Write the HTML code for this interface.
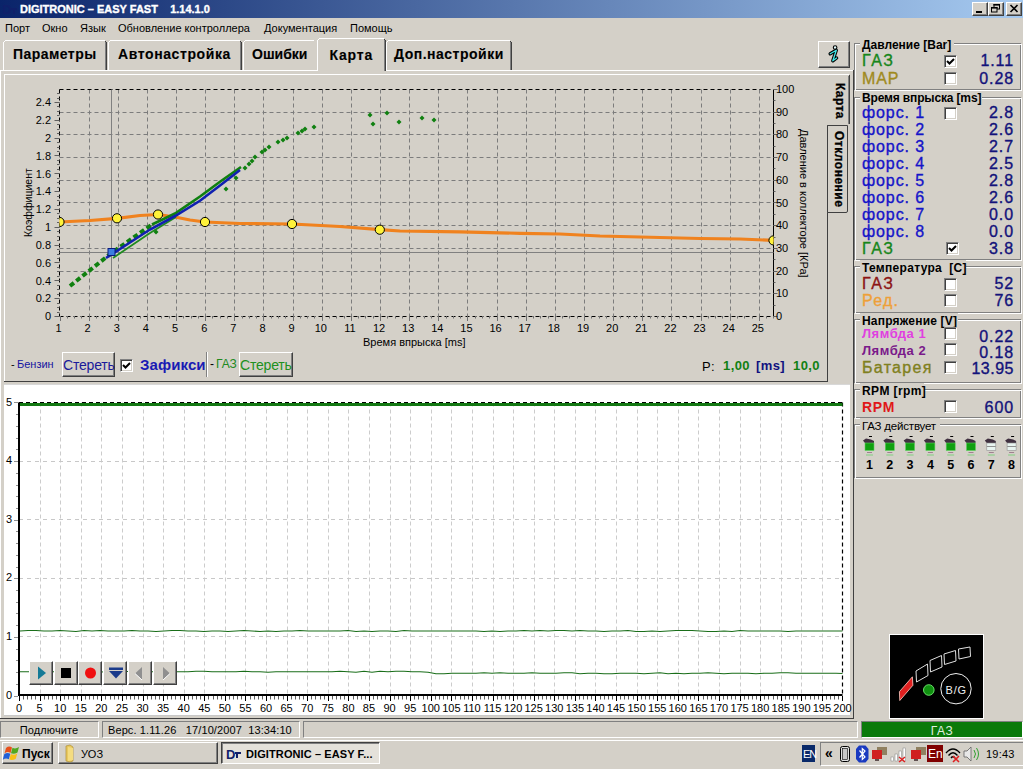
<!DOCTYPE html>
<html><head><meta charset="utf-8">
<style>
*{margin:0;padding:0;box-sizing:border-box}
html,body{width:1023px;height:769px;overflow:hidden;background:#D4D0C8;font-family:"Liberation Sans",sans-serif}
body{position:relative}
.a{position:absolute}
.t{position:absolute;white-space:pre;line-height:1}
svg{position:absolute;overflow:visible}
svg text{font-family:"Liberation Sans",sans-serif}
</style></head><body>

<div class="a" style="left:0px;top:0px;width:1023px;height:18px;background:linear-gradient(to right,#0A246A 0%,#A6CAF0 100%)"></div>
<svg style="left:2px;top:2px" width="16" height="14"><text x="0" y="12" font-size="13" font-weight="bold" fill="#10206a">D</text><rect x="9" y="6" width="6" height="2" fill="#10206a"/><rect x="11" y="6" width="2" height="6" fill="#10206a"/></svg>
<div class="t" style="left:20px;top:4px;font-size:11px;color:#fff;font-weight:bold;letter-spacing:0px;-webkit-text-stroke:0.35px #fff">DIGITRONIC – EASY FAST    1.14.1.0</div>
<div class="a" style="left:972px;top:2px;width:16px;height:14px;background:#D4D0C8;border-top:1px solid #fff;border-left:1px solid #fff;border-right:1px solid #404040;border-bottom:1px solid #404040;box-shadow:inset -1px -1px 0 #808080"></div>
<div class="a" style="left:976px;top:11px;width:6px;height:2px;background:#000"></div>
<div class="a" style="left:988px;top:2px;width:16px;height:14px;background:#D4D0C8;border-top:1px solid #fff;border-left:1px solid #fff;border-right:1px solid #404040;border-bottom:1px solid #404040;box-shadow:inset -1px -1px 0 #808080"></div>
<svg style="left:991px;top:4px" width="11" height="10"><rect x="3" y="0.5" width="5.5" height="4.5" fill="none" stroke="#000"/><rect x="2.5" y="0" width="6.5" height="1.6" fill="#000"/><rect x="0.5" y="3.5" width="5.5" height="4.5" fill="#D4D0C8" stroke="#000"/><rect x="0" y="3" width="6.5" height="1.6" fill="#000"/></svg>
<div class="a" style="left:1006px;top:2px;width:16px;height:14px;background:#D4D0C8;border-top:1px solid #fff;border-left:1px solid #fff;border-right:1px solid #404040;border-bottom:1px solid #404040;box-shadow:inset -1px -1px 0 #808080"></div>
<svg style="left:1010px;top:5px" width="9" height="8"><path d="M0.5 0 L7.5 7 M7.5 0 L0.5 7" stroke="#000" stroke-width="1.6"/></svg>
<div class="a" style="left:0px;top:18px;width:1023px;height:1px;background:#D4D0C8"></div>
<div class="t" style="left:5px;top:23px;font-size:11px;color:#000;font-weight:normal;letter-spacing:0px;">Порт</div>
<div class="t" style="left:42px;top:23px;font-size:11px;color:#000;font-weight:normal;letter-spacing:0px;">Окно</div>
<div class="t" style="left:80px;top:23px;font-size:11px;color:#000;font-weight:normal;letter-spacing:0px;">Язык</div>
<div class="t" style="left:118px;top:23px;font-size:11px;color:#000;font-weight:normal;letter-spacing:0px;">Обновление контроллера</div>
<div class="t" style="left:264px;top:23px;font-size:11px;color:#000;font-weight:normal;letter-spacing:0px;">Документация</div>
<div class="t" style="left:350px;top:23px;font-size:11px;color:#000;font-weight:normal;letter-spacing:0px;">Помощь</div>
<div class="a" style="left:0px;top:70px;width:853px;height:1px;background:#fff"></div>
<div class="a" style="left:3px;top:40px;width:104px;height:30px;background:#D4D0C8"></div>
<div class="a" style="left:5px;top:40px;width:100px;height:1px;background:#fff"></div>
<div class="a" style="left:3px;top:42px;width:1px;height:28px;background:#fff"></div>
<div class="a" style="left:4px;top:41px;width:1px;height:1px;background:#fff"></div>
<div class="a" style="left:106px;top:42px;width:1px;height:28px;background:#404040"></div>
<div class="a" style="left:105px;top:41px;width:1px;height:29px;background:#808080"></div>
<div class="a" style="left:105px;top:41px;width:1px;height:1px;background:#404040"></div>
<div class="t" style="left:13px;top:47px;font-size:14px;color:#000;font-weight:bold;letter-spacing:0.45px;-webkit-text-stroke:0.12px #000">Параметры</div>
<div class="a" style="left:108px;top:40px;width:134px;height:30px;background:#D4D0C8"></div>
<div class="a" style="left:110px;top:40px;width:130px;height:1px;background:#fff"></div>
<div class="a" style="left:108px;top:42px;width:1px;height:28px;background:#fff"></div>
<div class="a" style="left:109px;top:41px;width:1px;height:1px;background:#fff"></div>
<div class="a" style="left:241px;top:42px;width:1px;height:28px;background:#404040"></div>
<div class="a" style="left:240px;top:41px;width:1px;height:29px;background:#808080"></div>
<div class="a" style="left:240px;top:41px;width:1px;height:1px;background:#404040"></div>
<div class="t" style="left:118px;top:47px;font-size:14px;color:#000;font-weight:bold;letter-spacing:0.6px;-webkit-text-stroke:0.12px #000">Автонастройка</div>
<div class="a" style="left:243px;top:40px;width:74px;height:30px;background:#D4D0C8"></div>
<div class="a" style="left:245px;top:40px;width:70px;height:1px;background:#fff"></div>
<div class="a" style="left:243px;top:42px;width:1px;height:28px;background:#fff"></div>
<div class="a" style="left:244px;top:41px;width:1px;height:1px;background:#fff"></div>
<div class="a" style="left:316px;top:42px;width:1px;height:28px;background:#404040"></div>
<div class="a" style="left:315px;top:41px;width:1px;height:29px;background:#808080"></div>
<div class="a" style="left:315px;top:41px;width:1px;height:1px;background:#404040"></div>
<div class="t" style="left:252px;top:47px;font-size:14px;color:#000;font-weight:bold;letter-spacing:0.0px;-webkit-text-stroke:0.12px #000">Ошибки</div>
<div class="a" style="left:314px;top:40px;width:4px;height:30px;background:#D4D0C8"></div>
<div class="a" style="left:317px;top:38px;width:69px;height:33px;background:#D4D0C8"></div>
<div class="a" style="left:319px;top:38px;width:65px;height:1px;background:#fff"></div>
<div class="a" style="left:317px;top:40px;width:1px;height:31px;background:#fff"></div>
<div class="a" style="left:318px;top:39px;width:1px;height:1px;background:#fff"></div>
<div class="a" style="left:385px;top:40px;width:1px;height:31px;background:#404040"></div>
<div class="a" style="left:384px;top:39px;width:1px;height:32px;background:#808080"></div>
<div class="a" style="left:384px;top:39px;width:1px;height:1px;background:#404040"></div>
<div class="t" style="left:329.5px;top:48px;font-size:14px;color:#000;font-weight:bold;letter-spacing:0.8px;-webkit-text-stroke:0.12px #000">Карта</div>
<div class="a" style="left:386px;top:40px;width:126px;height:30px;background:#D4D0C8"></div>
<div class="a" style="left:388px;top:40px;width:122px;height:1px;background:#fff"></div>
<div class="a" style="left:386px;top:42px;width:1px;height:28px;background:#fff"></div>
<div class="a" style="left:387px;top:41px;width:1px;height:1px;background:#fff"></div>
<div class="a" style="left:511px;top:42px;width:1px;height:28px;background:#404040"></div>
<div class="a" style="left:510px;top:41px;width:1px;height:29px;background:#808080"></div>
<div class="a" style="left:510px;top:41px;width:1px;height:1px;background:#404040"></div>
<div class="t" style="left:394px;top:47px;font-size:14px;color:#000;font-weight:bold;letter-spacing:0.5px;-webkit-text-stroke:0.12px #000">Доп.настройки</div>
<div class="a" style="left:818px;top:41px;width:32px;height:27px;background:#D4D0C8;border-top:1px solid #fff;border-left:1px solid #fff;border-right:1px solid #404040;border-bottom:1px solid #404040;box-shadow:inset -1px -1px 0 #808080"></div>
<svg style="left:826px;top:43px" width="18" height="22"><circle cx="9.1" cy="4.5" r="1.8" fill="#e0ffff" stroke="#000" stroke-width="1.1"/><path d="M4.2 10.8 L10.3 7.3 L6.8 17.8 L10.6 15" fill="none" stroke="#000" stroke-width="3.4" stroke-linejoin="round" stroke-linecap="round"/><path d="M4.2 10.8 L10.3 7.3 L6.8 17.8 L10.6 15" fill="none" stroke="#40e8e8" stroke-width="1.3" stroke-linejoin="round" stroke-linecap="round"/></svg>
<div class="a" style="left:853px;top:70px;width:1px;height:649px;background:#404040"></div>
<div class="a" style="left:0px;top:70px;width:1px;height:649px;background:#fff"></div>
<div class="a" style="left:4px;top:74px;width:823px;height:1px;background:#fff"></div>
<div class="a" style="left:4px;top:74px;width:1px;height:307px;background:#fff"></div>
<div class="a" style="left:4px;top:381px;width:824px;height:1px;background:#404040"></div>
<div class="a" style="left:827px;top:125px;width:1px;height:257px;background:#404040"></div>
<div class="a" style="left:827px;top:74px;width:22px;height:1px;background:#fff"></div>
<div class="a" style="left:849px;top:75px;width:1px;height:49px;background:#404040"></div>
<div class="a" style="left:848px;top:76px;width:1px;height:48px;background:#808080"></div>
<div class="a" style="left:827px;top:125px;width:21px;height:88px;background:#D4D0C8;border-top:1px solid #404040;border-left:1px solid #404040;border-right:1px solid #404040;border-bottom:1px solid #404040;border-bottom-right-radius:2px"></div>
<div class="t" style="left:844.5px;top:131px;font-size:12px;font-weight:bold;letter-spacing:0.5px;-webkit-text-stroke:0.3px #000;transform-origin:0 0;transform:rotate(90deg)">Отклонение</div>
<div class="t" style="left:846px;top:83px;font-size:12px;font-weight:bold;letter-spacing:0.4px;-webkit-text-stroke:0.3px #000;transform-origin:0 0;transform:rotate(90deg)">Карта</div>
<svg style="left:0;top:0" width="1023" height="769">
<line x1="89.5" y1="89.5" x2="89.5" y2="316.0" stroke="#7c7c7c" stroke-width="1" stroke-dasharray="4 3"/>
<line x1="118.5" y1="89.5" x2="118.5" y2="316.0" stroke="#7c7c7c" stroke-width="1" stroke-dasharray="4 3"/>
<line x1="147.5" y1="89.5" x2="147.5" y2="316.0" stroke="#7c7c7c" stroke-width="1" stroke-dasharray="4 3"/>
<line x1="176.5" y1="89.5" x2="176.5" y2="316.0" stroke="#7c7c7c" stroke-width="1" stroke-dasharray="4 3"/>
<line x1="205.5" y1="89.5" x2="205.5" y2="316.0" stroke="#7c7c7c" stroke-width="1" stroke-dasharray="4 3"/>
<line x1="234.5" y1="89.5" x2="234.5" y2="316.0" stroke="#7c7c7c" stroke-width="1" stroke-dasharray="4 3"/>
<line x1="263.5" y1="89.5" x2="263.5" y2="316.0" stroke="#7c7c7c" stroke-width="1" stroke-dasharray="4 3"/>
<line x1="293.5" y1="89.5" x2="293.5" y2="316.0" stroke="#7c7c7c" stroke-width="1" stroke-dasharray="4 3"/>
<line x1="322.5" y1="89.5" x2="322.5" y2="316.0" stroke="#7c7c7c" stroke-width="1" stroke-dasharray="4 3"/>
<line x1="351.5" y1="89.5" x2="351.5" y2="316.0" stroke="#7c7c7c" stroke-width="1" stroke-dasharray="4 3"/>
<line x1="380.5" y1="89.5" x2="380.5" y2="316.0" stroke="#7c7c7c" stroke-width="1" stroke-dasharray="4 3"/>
<line x1="409.5" y1="89.5" x2="409.5" y2="316.0" stroke="#7c7c7c" stroke-width="1" stroke-dasharray="4 3"/>
<line x1="438.5" y1="89.5" x2="438.5" y2="316.0" stroke="#7c7c7c" stroke-width="1" stroke-dasharray="4 3"/>
<line x1="467.5" y1="89.5" x2="467.5" y2="316.0" stroke="#7c7c7c" stroke-width="1" stroke-dasharray="4 3"/>
<line x1="497.5" y1="89.5" x2="497.5" y2="316.0" stroke="#7c7c7c" stroke-width="1" stroke-dasharray="4 3"/>
<line x1="526.5" y1="89.5" x2="526.5" y2="316.0" stroke="#7c7c7c" stroke-width="1" stroke-dasharray="4 3"/>
<line x1="555.5" y1="89.5" x2="555.5" y2="316.0" stroke="#7c7c7c" stroke-width="1" stroke-dasharray="4 3"/>
<line x1="584.5" y1="89.5" x2="584.5" y2="316.0" stroke="#7c7c7c" stroke-width="1" stroke-dasharray="4 3"/>
<line x1="613.5" y1="89.5" x2="613.5" y2="316.0" stroke="#7c7c7c" stroke-width="1" stroke-dasharray="4 3"/>
<line x1="642.5" y1="89.5" x2="642.5" y2="316.0" stroke="#7c7c7c" stroke-width="1" stroke-dasharray="4 3"/>
<line x1="671.5" y1="89.5" x2="671.5" y2="316.0" stroke="#7c7c7c" stroke-width="1" stroke-dasharray="4 3"/>
<line x1="701.5" y1="89.5" x2="701.5" y2="316.0" stroke="#7c7c7c" stroke-width="1" stroke-dasharray="4 3"/>
<line x1="730.5" y1="89.5" x2="730.5" y2="316.0" stroke="#7c7c7c" stroke-width="1" stroke-dasharray="4 3"/>
<line x1="759.5" y1="89.5" x2="759.5" y2="316.0" stroke="#7c7c7c" stroke-width="1" stroke-dasharray="4 3"/>
<line x1="59.5" y1="293.5" x2="773.5" y2="293.5" stroke="#7c7c7c" stroke-width="1" stroke-dasharray="4 3"/>
<line x1="59.5" y1="271.5" x2="773.5" y2="271.5" stroke="#7c7c7c" stroke-width="1" stroke-dasharray="4 3"/>
<line x1="59.5" y1="248.5" x2="773.5" y2="248.5" stroke="#7c7c7c" stroke-width="1" stroke-dasharray="4 3"/>
<line x1="59.5" y1="225.5" x2="773.5" y2="225.5" stroke="#7c7c7c" stroke-width="1" stroke-dasharray="4 3"/>
<line x1="59.5" y1="202.5" x2="773.5" y2="202.5" stroke="#7c7c7c" stroke-width="1" stroke-dasharray="4 3"/>
<line x1="59.5" y1="180.5" x2="773.5" y2="180.5" stroke="#7c7c7c" stroke-width="1" stroke-dasharray="4 3"/>
<line x1="59.5" y1="157.5" x2="773.5" y2="157.5" stroke="#7c7c7c" stroke-width="1" stroke-dasharray="4 3"/>
<line x1="59.5" y1="134.5" x2="773.5" y2="134.5" stroke="#7c7c7c" stroke-width="1" stroke-dasharray="4 3"/>
<line x1="59.5" y1="112.5" x2="773.5" y2="112.5" stroke="#7c7c7c" stroke-width="1" stroke-dasharray="4 3"/>
<line x1="59.5" y1="89.5" x2="773.5" y2="89.5" stroke="#000" stroke-width="1" stroke-dasharray="4 3"/>
<line x1="59.5" y1="316.5" x2="773.5" y2="316.5" stroke="#000" stroke-width="1" stroke-dasharray="4 3"/>
<line x1="59.5" y1="89.5" x2="59.5" y2="316.0" stroke="#000" stroke-width="1" stroke-dasharray="4 3"/>
<line x1="773.5" y1="89.5" x2="773.5" y2="316.0" stroke="#000" stroke-width="1"/>
<line x1="60.5" y1="316.0" x2="60.5" y2="321.0" stroke="#707070"/>
<line x1="67.5" y1="316.0" x2="67.5" y2="318.5" stroke="#707070"/>
<line x1="74.5" y1="316.0" x2="74.5" y2="318.5" stroke="#707070"/>
<line x1="81.5" y1="316.0" x2="81.5" y2="318.5" stroke="#707070"/>
<text x="58.5" y="332" font-size="11" text-anchor="middle" fill="#000">1</text>
<line x1="89.5" y1="316.0" x2="89.5" y2="321.0" stroke="#707070"/>
<line x1="96.5" y1="316.0" x2="96.5" y2="318.5" stroke="#707070"/>
<line x1="103.5" y1="316.0" x2="103.5" y2="318.5" stroke="#707070"/>
<line x1="110.5" y1="316.0" x2="110.5" y2="318.5" stroke="#707070"/>
<text x="87.64" y="332" font-size="11" text-anchor="middle" fill="#000">2</text>
<line x1="118.5" y1="316.0" x2="118.5" y2="321.0" stroke="#707070"/>
<line x1="125.5" y1="316.0" x2="125.5" y2="318.5" stroke="#707070"/>
<line x1="132.5" y1="316.0" x2="132.5" y2="318.5" stroke="#707070"/>
<line x1="140.5" y1="316.0" x2="140.5" y2="318.5" stroke="#707070"/>
<text x="116.78" y="332" font-size="11" text-anchor="middle" fill="#000">3</text>
<line x1="147.5" y1="316.0" x2="147.5" y2="321.0" stroke="#707070"/>
<line x1="154.5" y1="316.0" x2="154.5" y2="318.5" stroke="#707070"/>
<line x1="161.5" y1="316.0" x2="161.5" y2="318.5" stroke="#707070"/>
<line x1="169.5" y1="316.0" x2="169.5" y2="318.5" stroke="#707070"/>
<text x="145.92000000000002" y="332" font-size="11" text-anchor="middle" fill="#000">4</text>
<line x1="176.5" y1="316.0" x2="176.5" y2="321.0" stroke="#707070"/>
<line x1="183.5" y1="316.0" x2="183.5" y2="318.5" stroke="#707070"/>
<line x1="191.5" y1="316.0" x2="191.5" y2="318.5" stroke="#707070"/>
<line x1="198.5" y1="316.0" x2="198.5" y2="318.5" stroke="#707070"/>
<text x="175.06" y="332" font-size="11" text-anchor="middle" fill="#000">5</text>
<line x1="205.5" y1="316.0" x2="205.5" y2="321.0" stroke="#707070"/>
<line x1="212.5" y1="316.0" x2="212.5" y2="318.5" stroke="#707070"/>
<line x1="220.5" y1="316.0" x2="220.5" y2="318.5" stroke="#707070"/>
<line x1="227.5" y1="316.0" x2="227.5" y2="318.5" stroke="#707070"/>
<text x="204.2" y="332" font-size="11" text-anchor="middle" fill="#000">6</text>
<line x1="234.5" y1="316.0" x2="234.5" y2="321.0" stroke="#707070"/>
<line x1="242.5" y1="316.0" x2="242.5" y2="318.5" stroke="#707070"/>
<line x1="249.5" y1="316.0" x2="249.5" y2="318.5" stroke="#707070"/>
<line x1="256.5" y1="316.0" x2="256.5" y2="318.5" stroke="#707070"/>
<text x="233.34" y="332" font-size="11" text-anchor="middle" fill="#000">7</text>
<line x1="263.5" y1="316.0" x2="263.5" y2="321.0" stroke="#707070"/>
<line x1="271.5" y1="316.0" x2="271.5" y2="318.5" stroke="#707070"/>
<line x1="278.5" y1="316.0" x2="278.5" y2="318.5" stroke="#707070"/>
<line x1="285.5" y1="316.0" x2="285.5" y2="318.5" stroke="#707070"/>
<text x="262.48" y="332" font-size="11" text-anchor="middle" fill="#000">8</text>
<line x1="293.5" y1="316.0" x2="293.5" y2="321.0" stroke="#707070"/>
<line x1="300.5" y1="316.0" x2="300.5" y2="318.5" stroke="#707070"/>
<line x1="307.5" y1="316.0" x2="307.5" y2="318.5" stroke="#707070"/>
<line x1="314.5" y1="316.0" x2="314.5" y2="318.5" stroke="#707070"/>
<text x="291.62" y="332" font-size="11" text-anchor="middle" fill="#000">9</text>
<line x1="322.5" y1="316.0" x2="322.5" y2="321.0" stroke="#707070"/>
<line x1="329.5" y1="316.0" x2="329.5" y2="318.5" stroke="#707070"/>
<line x1="336.5" y1="316.0" x2="336.5" y2="318.5" stroke="#707070"/>
<line x1="344.5" y1="316.0" x2="344.5" y2="318.5" stroke="#707070"/>
<text x="320.76" y="332" font-size="11" text-anchor="middle" fill="#000">10</text>
<line x1="351.5" y1="316.0" x2="351.5" y2="321.0" stroke="#707070"/>
<line x1="358.5" y1="316.0" x2="358.5" y2="318.5" stroke="#707070"/>
<line x1="365.5" y1="316.0" x2="365.5" y2="318.5" stroke="#707070"/>
<line x1="373.5" y1="316.0" x2="373.5" y2="318.5" stroke="#707070"/>
<text x="349.9" y="332" font-size="11" text-anchor="middle" fill="#000">11</text>
<line x1="380.5" y1="316.0" x2="380.5" y2="321.0" stroke="#707070"/>
<line x1="387.5" y1="316.0" x2="387.5" y2="318.5" stroke="#707070"/>
<line x1="395.5" y1="316.0" x2="395.5" y2="318.5" stroke="#707070"/>
<line x1="402.5" y1="316.0" x2="402.5" y2="318.5" stroke="#707070"/>
<text x="379.04" y="332" font-size="11" text-anchor="middle" fill="#000">12</text>
<line x1="409.5" y1="316.0" x2="409.5" y2="321.0" stroke="#707070"/>
<line x1="416.5" y1="316.0" x2="416.5" y2="318.5" stroke="#707070"/>
<line x1="424.5" y1="316.0" x2="424.5" y2="318.5" stroke="#707070"/>
<line x1="431.5" y1="316.0" x2="431.5" y2="318.5" stroke="#707070"/>
<text x="408.18" y="332" font-size="11" text-anchor="middle" fill="#000">13</text>
<line x1="438.5" y1="316.0" x2="438.5" y2="321.0" stroke="#707070"/>
<line x1="446.5" y1="316.0" x2="446.5" y2="318.5" stroke="#707070"/>
<line x1="453.5" y1="316.0" x2="453.5" y2="318.5" stroke="#707070"/>
<line x1="460.5" y1="316.0" x2="460.5" y2="318.5" stroke="#707070"/>
<text x="437.32" y="332" font-size="11" text-anchor="middle" fill="#000">14</text>
<line x1="467.5" y1="316.0" x2="467.5" y2="321.0" stroke="#707070"/>
<line x1="475.5" y1="316.0" x2="475.5" y2="318.5" stroke="#707070"/>
<line x1="482.5" y1="316.0" x2="482.5" y2="318.5" stroke="#707070"/>
<line x1="489.5" y1="316.0" x2="489.5" y2="318.5" stroke="#707070"/>
<text x="466.46000000000004" y="332" font-size="11" text-anchor="middle" fill="#000">15</text>
<line x1="497.5" y1="316.0" x2="497.5" y2="321.0" stroke="#707070"/>
<line x1="504.5" y1="316.0" x2="504.5" y2="318.5" stroke="#707070"/>
<line x1="511.5" y1="316.0" x2="511.5" y2="318.5" stroke="#707070"/>
<line x1="518.5" y1="316.0" x2="518.5" y2="318.5" stroke="#707070"/>
<text x="495.6" y="332" font-size="11" text-anchor="middle" fill="#000">16</text>
<line x1="526.5" y1="316.0" x2="526.5" y2="321.0" stroke="#707070"/>
<line x1="533.5" y1="316.0" x2="533.5" y2="318.5" stroke="#707070"/>
<line x1="540.5" y1="316.0" x2="540.5" y2="318.5" stroke="#707070"/>
<line x1="548.5" y1="316.0" x2="548.5" y2="318.5" stroke="#707070"/>
<text x="524.74" y="332" font-size="11" text-anchor="middle" fill="#000">17</text>
<line x1="555.5" y1="316.0" x2="555.5" y2="321.0" stroke="#707070"/>
<line x1="562.5" y1="316.0" x2="562.5" y2="318.5" stroke="#707070"/>
<line x1="569.5" y1="316.0" x2="569.5" y2="318.5" stroke="#707070"/>
<line x1="577.5" y1="316.0" x2="577.5" y2="318.5" stroke="#707070"/>
<text x="553.88" y="332" font-size="11" text-anchor="middle" fill="#000">18</text>
<line x1="584.5" y1="316.0" x2="584.5" y2="321.0" stroke="#707070"/>
<line x1="591.5" y1="316.0" x2="591.5" y2="318.5" stroke="#707070"/>
<line x1="599.5" y1="316.0" x2="599.5" y2="318.5" stroke="#707070"/>
<line x1="606.5" y1="316.0" x2="606.5" y2="318.5" stroke="#707070"/>
<text x="583.02" y="332" font-size="11" text-anchor="middle" fill="#000">19</text>
<line x1="613.5" y1="316.0" x2="613.5" y2="321.0" stroke="#707070"/>
<line x1="620.5" y1="316.0" x2="620.5" y2="318.5" stroke="#707070"/>
<line x1="628.5" y1="316.0" x2="628.5" y2="318.5" stroke="#707070"/>
<line x1="635.5" y1="316.0" x2="635.5" y2="318.5" stroke="#707070"/>
<text x="612.16" y="332" font-size="11" text-anchor="middle" fill="#000">20</text>
<line x1="642.5" y1="316.0" x2="642.5" y2="321.0" stroke="#707070"/>
<line x1="650.5" y1="316.0" x2="650.5" y2="318.5" stroke="#707070"/>
<line x1="657.5" y1="316.0" x2="657.5" y2="318.5" stroke="#707070"/>
<line x1="664.5" y1="316.0" x2="664.5" y2="318.5" stroke="#707070"/>
<text x="641.3" y="332" font-size="11" text-anchor="middle" fill="#000">21</text>
<line x1="671.5" y1="316.0" x2="671.5" y2="321.0" stroke="#707070"/>
<line x1="679.5" y1="316.0" x2="679.5" y2="318.5" stroke="#707070"/>
<line x1="686.5" y1="316.0" x2="686.5" y2="318.5" stroke="#707070"/>
<line x1="693.5" y1="316.0" x2="693.5" y2="318.5" stroke="#707070"/>
<text x="670.44" y="332" font-size="11" text-anchor="middle" fill="#000">22</text>
<line x1="701.5" y1="316.0" x2="701.5" y2="321.0" stroke="#707070"/>
<line x1="708.5" y1="316.0" x2="708.5" y2="318.5" stroke="#707070"/>
<line x1="715.5" y1="316.0" x2="715.5" y2="318.5" stroke="#707070"/>
<line x1="722.5" y1="316.0" x2="722.5" y2="318.5" stroke="#707070"/>
<text x="699.58" y="332" font-size="11" text-anchor="middle" fill="#000">23</text>
<line x1="730.5" y1="316.0" x2="730.5" y2="321.0" stroke="#707070"/>
<line x1="737.5" y1="316.0" x2="737.5" y2="318.5" stroke="#707070"/>
<line x1="744.5" y1="316.0" x2="744.5" y2="318.5" stroke="#707070"/>
<line x1="752.5" y1="316.0" x2="752.5" y2="318.5" stroke="#707070"/>
<text x="728.72" y="332" font-size="11" text-anchor="middle" fill="#000">24</text>
<line x1="759.5" y1="316.0" x2="759.5" y2="321.0" stroke="#707070"/>
<line x1="766.5" y1="316.0" x2="766.5" y2="318.5" stroke="#707070"/>
<line x1="773.5" y1="316.0" x2="773.5" y2="318.5" stroke="#707070"/>
<text x="757.86" y="332" font-size="11" text-anchor="middle" fill="#000">25</text>
<line x1="54.5" y1="316.5" x2="59.5" y2="316.5" stroke="#606060"/>
<text x="51" y="320.3" font-size="11" text-anchor="end" fill="#000">0</text>
<line x1="54.5" y1="298.5" x2="59.5" y2="298.5" stroke="#606060"/>
<text x="51" y="302.466" font-size="11" text-anchor="end" fill="#000">0.2</text>
<line x1="54.5" y1="280.5" x2="59.5" y2="280.5" stroke="#606060"/>
<text x="51" y="284.632" font-size="11" text-anchor="end" fill="#000">0.4</text>
<line x1="54.5" y1="262.5" x2="59.5" y2="262.5" stroke="#606060"/>
<text x="51" y="266.798" font-size="11" text-anchor="end" fill="#000">0.6</text>
<line x1="54.5" y1="245.5" x2="59.5" y2="245.5" stroke="#606060"/>
<text x="51" y="248.964" font-size="11" text-anchor="end" fill="#000">0.8</text>
<line x1="54.5" y1="227.5" x2="59.5" y2="227.5" stroke="#606060"/>
<text x="51" y="231.13" font-size="11" text-anchor="end" fill="#000">1</text>
<line x1="54.5" y1="209.5" x2="59.5" y2="209.5" stroke="#606060"/>
<text x="51" y="213.296" font-size="11" text-anchor="end" fill="#000">1.2</text>
<line x1="54.5" y1="191.5" x2="59.5" y2="191.5" stroke="#606060"/>
<text x="51" y="195.462" font-size="11" text-anchor="end" fill="#000">1.4</text>
<line x1="54.5" y1="173.5" x2="59.5" y2="173.5" stroke="#606060"/>
<text x="51" y="177.62800000000001" font-size="11" text-anchor="end" fill="#000">1.6</text>
<line x1="54.5" y1="155.5" x2="59.5" y2="155.5" stroke="#606060"/>
<text x="51" y="159.794" font-size="11" text-anchor="end" fill="#000">1.8</text>
<line x1="54.5" y1="138.5" x2="59.5" y2="138.5" stroke="#606060"/>
<text x="51" y="141.96" font-size="11" text-anchor="end" fill="#000">2</text>
<line x1="54.5" y1="120.5" x2="59.5" y2="120.5" stroke="#606060"/>
<text x="51" y="124.12599999999999" font-size="11" text-anchor="end" fill="#000">2.2</text>
<line x1="54.5" y1="102.5" x2="59.5" y2="102.5" stroke="#606060"/>
<text x="51" y="106.29199999999996" font-size="11" text-anchor="end" fill="#000">2.4</text>
<line x1="57.0" y1="316.5" x2="59.5" y2="316.5" stroke="#606060"/>
<line x1="57.0" y1="312.5" x2="59.5" y2="312.5" stroke="#606060"/>
<line x1="57.0" y1="307.5" x2="59.5" y2="307.5" stroke="#606060"/>
<line x1="57.0" y1="303.5" x2="59.5" y2="303.5" stroke="#606060"/>
<line x1="57.0" y1="298.5" x2="59.5" y2="298.5" stroke="#606060"/>
<line x1="57.0" y1="294.5" x2="59.5" y2="294.5" stroke="#606060"/>
<line x1="57.0" y1="289.5" x2="59.5" y2="289.5" stroke="#606060"/>
<line x1="57.0" y1="285.5" x2="59.5" y2="285.5" stroke="#606060"/>
<line x1="57.0" y1="280.5" x2="59.5" y2="280.5" stroke="#606060"/>
<line x1="57.0" y1="276.5" x2="59.5" y2="276.5" stroke="#606060"/>
<line x1="57.0" y1="271.5" x2="59.5" y2="271.5" stroke="#606060"/>
<line x1="57.0" y1="267.5" x2="59.5" y2="267.5" stroke="#606060"/>
<line x1="57.0" y1="262.5" x2="59.5" y2="262.5" stroke="#606060"/>
<line x1="57.0" y1="258.5" x2="59.5" y2="258.5" stroke="#606060"/>
<line x1="57.0" y1="254.5" x2="59.5" y2="254.5" stroke="#606060"/>
<line x1="57.0" y1="249.5" x2="59.5" y2="249.5" stroke="#606060"/>
<line x1="57.0" y1="245.5" x2="59.5" y2="245.5" stroke="#606060"/>
<line x1="57.0" y1="240.5" x2="59.5" y2="240.5" stroke="#606060"/>
<line x1="57.0" y1="236.5" x2="59.5" y2="236.5" stroke="#606060"/>
<line x1="57.0" y1="231.5" x2="59.5" y2="231.5" stroke="#606060"/>
<line x1="57.0" y1="227.5" x2="59.5" y2="227.5" stroke="#606060"/>
<line x1="57.0" y1="222.5" x2="59.5" y2="222.5" stroke="#606060"/>
<line x1="57.0" y1="218.5" x2="59.5" y2="218.5" stroke="#606060"/>
<line x1="57.0" y1="213.5" x2="59.5" y2="213.5" stroke="#606060"/>
<line x1="57.0" y1="209.5" x2="59.5" y2="209.5" stroke="#606060"/>
<line x1="57.0" y1="205.5" x2="59.5" y2="205.5" stroke="#606060"/>
<line x1="57.0" y1="200.5" x2="59.5" y2="200.5" stroke="#606060"/>
<line x1="57.0" y1="196.5" x2="59.5" y2="196.5" stroke="#606060"/>
<line x1="57.0" y1="191.5" x2="59.5" y2="191.5" stroke="#606060"/>
<line x1="57.0" y1="187.5" x2="59.5" y2="187.5" stroke="#606060"/>
<line x1="57.0" y1="182.5" x2="59.5" y2="182.5" stroke="#606060"/>
<line x1="57.0" y1="178.5" x2="59.5" y2="178.5" stroke="#606060"/>
<line x1="57.0" y1="173.5" x2="59.5" y2="173.5" stroke="#606060"/>
<line x1="57.0" y1="169.5" x2="59.5" y2="169.5" stroke="#606060"/>
<line x1="57.0" y1="164.5" x2="59.5" y2="164.5" stroke="#606060"/>
<line x1="57.0" y1="160.5" x2="59.5" y2="160.5" stroke="#606060"/>
<line x1="57.0" y1="155.5" x2="59.5" y2="155.5" stroke="#606060"/>
<line x1="57.0" y1="151.5" x2="59.5" y2="151.5" stroke="#606060"/>
<line x1="57.0" y1="147.5" x2="59.5" y2="147.5" stroke="#606060"/>
<line x1="57.0" y1="142.5" x2="59.5" y2="142.5" stroke="#606060"/>
<line x1="57.0" y1="138.5" x2="59.5" y2="138.5" stroke="#606060"/>
<line x1="57.0" y1="133.5" x2="59.5" y2="133.5" stroke="#606060"/>
<line x1="57.0" y1="129.5" x2="59.5" y2="129.5" stroke="#606060"/>
<line x1="57.0" y1="124.5" x2="59.5" y2="124.5" stroke="#606060"/>
<line x1="57.0" y1="120.5" x2="59.5" y2="120.5" stroke="#606060"/>
<line x1="57.0" y1="115.5" x2="59.5" y2="115.5" stroke="#606060"/>
<line x1="57.0" y1="111.5" x2="59.5" y2="111.5" stroke="#606060"/>
<line x1="57.0" y1="106.5" x2="59.5" y2="106.5" stroke="#606060"/>
<line x1="57.0" y1="102.5" x2="59.5" y2="102.5" stroke="#606060"/>
<line x1="57.0" y1="98.5" x2="59.5" y2="98.5" stroke="#606060"/>
<line x1="57.0" y1="93.5" x2="59.5" y2="93.5" stroke="#606060"/>
<line x1="773.5" y1="316.5" x2="777.5" y2="316.5" stroke="#606060"/>
<text x="776" y="320.0" font-size="11" fill="#000">0</text>
<line x1="773.5" y1="293.5" x2="777.5" y2="293.5" stroke="#606060"/>
<text x="776" y="297.3" font-size="11" fill="#000">10</text>
<line x1="773.5" y1="271.5" x2="777.5" y2="271.5" stroke="#606060"/>
<text x="776" y="274.6" font-size="11" fill="#000">20</text>
<line x1="773.5" y1="248.5" x2="777.5" y2="248.5" stroke="#606060"/>
<text x="776" y="251.9" font-size="11" fill="#000">30</text>
<line x1="773.5" y1="225.5" x2="777.5" y2="225.5" stroke="#606060"/>
<text x="776" y="229.2" font-size="11" fill="#000">40</text>
<line x1="773.5" y1="202.5" x2="777.5" y2="202.5" stroke="#606060"/>
<text x="776" y="206.5" font-size="11" fill="#000">50</text>
<line x1="773.5" y1="180.5" x2="777.5" y2="180.5" stroke="#606060"/>
<text x="776" y="183.8" font-size="11" fill="#000">60</text>
<line x1="773.5" y1="157.5" x2="777.5" y2="157.5" stroke="#606060"/>
<text x="776" y="161.1" font-size="11" fill="#000">70</text>
<line x1="773.5" y1="134.5" x2="777.5" y2="134.5" stroke="#606060"/>
<text x="776" y="138.4" font-size="11" fill="#000">80</text>
<line x1="773.5" y1="112.5" x2="777.5" y2="112.5" stroke="#606060"/>
<text x="776" y="115.69999999999999" font-size="11" fill="#000">90</text>
<line x1="773.5" y1="89.5" x2="777.5" y2="89.5" stroke="#606060"/>
<text x="776" y="93.0" font-size="11" fill="#000">100</text>
<line x1="773.5" y1="316.5" x2="775.5" y2="316.5" stroke="#606060"/>
<line x1="773.5" y1="305.5" x2="775.5" y2="305.5" stroke="#606060"/>
<line x1="773.5" y1="293.5" x2="775.5" y2="293.5" stroke="#606060"/>
<line x1="773.5" y1="282.5" x2="775.5" y2="282.5" stroke="#606060"/>
<line x1="773.5" y1="271.5" x2="775.5" y2="271.5" stroke="#606060"/>
<line x1="773.5" y1="259.5" x2="775.5" y2="259.5" stroke="#606060"/>
<line x1="773.5" y1="248.5" x2="775.5" y2="248.5" stroke="#606060"/>
<line x1="773.5" y1="237.5" x2="775.5" y2="237.5" stroke="#606060"/>
<line x1="773.5" y1="225.5" x2="775.5" y2="225.5" stroke="#606060"/>
<line x1="773.5" y1="214.5" x2="775.5" y2="214.5" stroke="#606060"/>
<line x1="773.5" y1="202.5" x2="775.5" y2="202.5" stroke="#606060"/>
<line x1="773.5" y1="191.5" x2="775.5" y2="191.5" stroke="#606060"/>
<line x1="773.5" y1="180.5" x2="775.5" y2="180.5" stroke="#606060"/>
<line x1="773.5" y1="168.5" x2="775.5" y2="168.5" stroke="#606060"/>
<line x1="773.5" y1="157.5" x2="775.5" y2="157.5" stroke="#606060"/>
<line x1="773.5" y1="146.5" x2="775.5" y2="146.5" stroke="#606060"/>
<line x1="773.5" y1="134.5" x2="775.5" y2="134.5" stroke="#606060"/>
<line x1="773.5" y1="123.5" x2="775.5" y2="123.5" stroke="#606060"/>
<line x1="773.5" y1="112.5" x2="775.5" y2="112.5" stroke="#606060"/>
<line x1="773.5" y1="100.5" x2="775.5" y2="100.5" stroke="#606060"/>
<line x1="773.5" y1="89.5" x2="775.5" y2="89.5" stroke="#606060"/>
<text x="363" y="346" font-size="11" fill="#000">Время впрыска [ms]</text>
<text transform="translate(32,237) rotate(-90)" font-size="10.5" fill="#000">Коэффициент</text>
<text transform="translate(800,129) rotate(90)" font-size="11" fill="#000">Давление в коллекторе [КРа]</text>
<line x1="111.5" y1="89.5" x2="111.5" y2="316.0" stroke="#808080" stroke-width="1"/>
<line x1="59.5" y1="252.5" x2="773.5" y2="252.5" stroke="#808080" stroke-width="1"/>
<polyline points="59.5,222 90,220.5 117,218.3 140,215.5 158,214.5 175,217 190,220 205,222 240,223.5 292,224 340,226.5 380,229.7 400,231 460,231.8 520,233.3 560,234 600,236 660,237.5 700,238.5 740,239 773.5,240.4" fill="none" stroke="#F0821E" stroke-width="3.2" stroke-linejoin="round"/>
<polyline points="70,286 111.5,253 152,224.5" fill="none" stroke="#108010" stroke-width="4" stroke-dasharray="5 3"/>
<polyline points="152,224.5 175,213.5 200,196.5 220,181.8 241,167" fill="none" stroke="#108010" stroke-width="2.6"/>
<polyline points="113,258 150,233 176,217" fill="none" stroke="#208a20" stroke-width="1.8"/>
<polyline points="106,258 130,242.5 150,229.5 175,216 200,200.8 220,185.5 240,170" fill="none" stroke="#1020b0" stroke-width="2.6"/>
<path d="M245 165.5 L247.5 168 L245 170.5 L242.5 168 Z" fill="#108010"/>
<path d="M249 161.5 L251.5 164 L249 166.5 L246.5 164 Z" fill="#108010"/>
<path d="M252 158.5 L254.5 161 L252 163.5 L249.5 161 Z" fill="#108010"/>
<path d="M255 154.5 L257.5 157 L255 159.5 L252.5 157 Z" fill="#108010"/>
<path d="M262 149.5 L264.5 152 L262 154.5 L259.5 152 Z" fill="#108010"/>
<path d="M265 147.5 L267.5 150 L265 152.5 L262.5 150 Z" fill="#108010"/>
<path d="M269 144.5 L271.5 147 L269 149.5 L266.5 147 Z" fill="#108010"/>
<path d="M278 139.5 L280.5 142 L278 144.5 L275.5 142 Z" fill="#108010"/>
<path d="M283 137.5 L285.5 140 L283 142.5 L280.5 140 Z" fill="#108010"/>
<path d="M287 135.5 L289.5 138 L287 140.5 L284.5 138 Z" fill="#108010"/>
<path d="M298 130.5 L300.5 133 L298 135.5 L295.5 133 Z" fill="#108010"/>
<path d="M302 128.5 L304.5 131 L302 133.5 L299.5 131 Z" fill="#108010"/>
<path d="M305 126.5 L307.5 129 L305 131.5 L302.5 129 Z" fill="#108010"/>
<path d="M314 124.5 L316.5 127 L314 129.5 L311.5 127 Z" fill="#108010"/>
<path d="M370 112.5 L372.5 115 L370 117.5 L367.5 115 Z" fill="#108010"/>
<path d="M373 121.5 L375.5 124 L373 126.5 L370.5 124 Z" fill="#108010"/>
<path d="M387 110.5 L389.5 113 L387 115.5 L384.5 113 Z" fill="#108010"/>
<path d="M399 119.5 L401.5 122 L399 124.5 L396.5 122 Z" fill="#108010"/>
<path d="M422 115.5 L424.5 118 L422 120.5 L419.5 118 Z" fill="#108010"/>
<path d="M434 117.5 L436.5 120 L434 122.5 L431.5 120 Z" fill="#108010"/>
<path d="M156 229.5 L158.5 232 L156 234.5 L153.5 232 Z" fill="#108010"/>
<path d="M226 186.5 L228.5 189 L226 191.5 L223.5 189 Z" fill="#108010"/>
<path d="M236 175.5 L238.5 178 L236 180.5 L233.5 178 Z" fill="#108010"/>
<defs><clipPath id="pc"><rect x="59.5" y="89.5" width="714.0" height="226.5"/></clipPath></defs>
<g clip-path="url(#pc)">
<circle cx="59.5" cy="222" r="4.6" fill="#FFF23A" stroke="#000" stroke-width="1"/>
<circle cx="117" cy="218.3" r="4.6" fill="#FFF23A" stroke="#000" stroke-width="1"/>
<circle cx="158" cy="214.5" r="4.6" fill="#FFF23A" stroke="#000" stroke-width="1"/>
<circle cx="205" cy="222" r="4.6" fill="#FFF23A" stroke="#000" stroke-width="1"/>
<circle cx="292" cy="224" r="4.6" fill="#FFF23A" stroke="#000" stroke-width="1"/>
<circle cx="379.8" cy="229.7" r="4.6" fill="#FFF23A" stroke="#000" stroke-width="1"/>
<circle cx="773.5" cy="240.4" r="4.6" fill="#FFF23A" stroke="#000" stroke-width="1"/>
</g>
<rect x="108" y="248.5" width="7" height="7" fill="#3c7ee0" stroke="#0a1a80" stroke-width="1"/>
</svg>
<div class="t" style="left:11px;top:359px;font-size:11px;color:#000;font-weight:normal;letter-spacing:0px;">-</div>
<div class="t" style="left:17px;top:359px;font-size:11px;color:#1414a0;font-weight:normal;letter-spacing:0px;">Бензин</div>
<div class="a" style="left:62px;top:352px;width:53px;height:25px;background:#D4D0C8;border-top:1px solid #fff;border-left:1px solid #fff;border-right:1px solid #404040;border-bottom:1px solid #404040;box-shadow:inset -1px -1px 0 #808080"></div>
<div class="t" style="left:63px;top:358px;font-size:14px;color:#1a1a9a;font-weight:normal;letter-spacing:-0.2px;">Стереть</div>
<div class="a" style="left:120px;top:359px;width:13px;height:13px;background:#fff;border-top:1px solid #808080;border-left:1px solid #808080;border-right:1px solid #fff;border-bottom:1px solid #fff;box-shadow:inset 1px 1px 0 #404040, inset -1px -1px 0 #D4D0C8"></div>
<svg class="a" style="left:120px;top:359px" width="13" height="13"><path d="M3 6 L5.5 8.5 L10 4" fill="none" stroke="#000" stroke-width="2"/></svg>
<div class="t" style="left:140px;top:357px;font-size:15px;color:#1a1ab4;font-weight:bold;letter-spacing:0.1px;">Зафикси</div>
<div class="a" style="left:206px;top:352px;width:1px;height:25px;background:#808080"></div>
<div class="a" style="left:207px;top:352px;width:1px;height:25px;background:#fff"></div>
<div class="t" style="left:210px;top:358px;font-size:12px;color:#000;font-weight:normal;letter-spacing:0px;">-</div>
<div class="t" style="left:216px;top:358px;font-size:12px;color:#208a20;font-weight:normal;letter-spacing:0px;">ГАЗ</div>
<div class="a" style="left:239px;top:352px;width:54px;height:25px;background:#D4D0C8;border-top:1px solid #fff;border-left:1px solid #fff;border-right:1px solid #404040;border-bottom:1px solid #404040;box-shadow:inset -1px -1px 0 #808080"></div>
<div class="t" style="left:240px;top:358px;font-size:14px;color:#209020;font-weight:normal;letter-spacing:-0.2px;">Стереть</div>
<div class="t" style="left:702px;top:360px;font-size:13px;color:#000;font-weight:normal;letter-spacing:0.3px;">P:</div>
<div class="t" style="left:723px;top:359px;font-size:13px;color:#128012;font-weight:bold;letter-spacing:0.4px;">1,00</div>
<div class="t" style="left:756px;top:359px;font-size:13px;color:#101080;font-weight:bold;letter-spacing:0.4px;">[ms]</div>
<div class="t" style="left:793px;top:359px;font-size:13px;color:#128012;font-weight:bold;letter-spacing:0.4px;">10,0</div>
<div class="a" style="left:4px;top:384px;width:849px;height:334px;background:#fff"></div>
<div class="a" style="left:4px;top:384px;width:849px;height:1px;background:#D8D8D8"></div>
<div class="a" style="left:4px;top:715px;width:849px;height:1px;background:#C8C8C8"></div>
<div class="a" style="left:4px;top:716px;width:849px;height:1px;background:#D4D0C8"></div>
<div class="a" style="left:4px;top:717px;width:849px;height:1px;background:#D4D0C8"></div>
<div class="a" style="left:0px;top:718px;width:854px;height:1px;background:#404040"></div>
<div class="a" style="left:850px;top:384px;width:1px;height:334px;background:#D4D0C8"></div>
<div class="a" style="left:851px;top:384px;width:1px;height:334px;background:#D4D0C8"></div>
<div class="a" style="left:852px;top:384px;width:1px;height:334px;background:#D4D0C8"></div>
<svg style="left:0;top:0" width="1023" height="769">
<line x1="40.5" y1="402.5" x2="40.5" y2="695.5" stroke="#cccccc" stroke-width="1" stroke-dasharray="4 3"/>
<line x1="60.5" y1="402.5" x2="60.5" y2="695.5" stroke="#cccccc" stroke-width="1" stroke-dasharray="4 3"/>
<line x1="81.5" y1="402.5" x2="81.5" y2="695.5" stroke="#cccccc" stroke-width="1" stroke-dasharray="4 3"/>
<line x1="101.5" y1="402.5" x2="101.5" y2="695.5" stroke="#cccccc" stroke-width="1" stroke-dasharray="4 3"/>
<line x1="122.5" y1="402.5" x2="122.5" y2="695.5" stroke="#cccccc" stroke-width="1" stroke-dasharray="4 3"/>
<line x1="143.5" y1="402.5" x2="143.5" y2="695.5" stroke="#cccccc" stroke-width="1" stroke-dasharray="4 3"/>
<line x1="163.5" y1="402.5" x2="163.5" y2="695.5" stroke="#cccccc" stroke-width="1" stroke-dasharray="4 3"/>
<line x1="184.5" y1="402.5" x2="184.5" y2="695.5" stroke="#cccccc" stroke-width="1" stroke-dasharray="4 3"/>
<line x1="204.5" y1="402.5" x2="204.5" y2="695.5" stroke="#cccccc" stroke-width="1" stroke-dasharray="4 3"/>
<line x1="225.5" y1="402.5" x2="225.5" y2="695.5" stroke="#cccccc" stroke-width="1" stroke-dasharray="4 3"/>
<line x1="245.5" y1="402.5" x2="245.5" y2="695.5" stroke="#cccccc" stroke-width="1" stroke-dasharray="4 3"/>
<line x1="266.5" y1="402.5" x2="266.5" y2="695.5" stroke="#cccccc" stroke-width="1" stroke-dasharray="4 3"/>
<line x1="287.5" y1="402.5" x2="287.5" y2="695.5" stroke="#cccccc" stroke-width="1" stroke-dasharray="4 3"/>
<line x1="307.5" y1="402.5" x2="307.5" y2="695.5" stroke="#cccccc" stroke-width="1" stroke-dasharray="4 3"/>
<line x1="328.5" y1="402.5" x2="328.5" y2="695.5" stroke="#cccccc" stroke-width="1" stroke-dasharray="4 3"/>
<line x1="348.5" y1="402.5" x2="348.5" y2="695.5" stroke="#cccccc" stroke-width="1" stroke-dasharray="4 3"/>
<line x1="369.5" y1="402.5" x2="369.5" y2="695.5" stroke="#cccccc" stroke-width="1" stroke-dasharray="4 3"/>
<line x1="390.5" y1="402.5" x2="390.5" y2="695.5" stroke="#cccccc" stroke-width="1" stroke-dasharray="4 3"/>
<line x1="410.5" y1="402.5" x2="410.5" y2="695.5" stroke="#cccccc" stroke-width="1" stroke-dasharray="4 3"/>
<line x1="431.5" y1="402.5" x2="431.5" y2="695.5" stroke="#cccccc" stroke-width="1" stroke-dasharray="4 3"/>
<line x1="451.5" y1="402.5" x2="451.5" y2="695.5" stroke="#cccccc" stroke-width="1" stroke-dasharray="4 3"/>
<line x1="472.5" y1="402.5" x2="472.5" y2="695.5" stroke="#cccccc" stroke-width="1" stroke-dasharray="4 3"/>
<line x1="493.5" y1="402.5" x2="493.5" y2="695.5" stroke="#cccccc" stroke-width="1" stroke-dasharray="4 3"/>
<line x1="513.5" y1="402.5" x2="513.5" y2="695.5" stroke="#cccccc" stroke-width="1" stroke-dasharray="4 3"/>
<line x1="534.5" y1="402.5" x2="534.5" y2="695.5" stroke="#cccccc" stroke-width="1" stroke-dasharray="4 3"/>
<line x1="554.5" y1="402.5" x2="554.5" y2="695.5" stroke="#cccccc" stroke-width="1" stroke-dasharray="4 3"/>
<line x1="575.5" y1="402.5" x2="575.5" y2="695.5" stroke="#cccccc" stroke-width="1" stroke-dasharray="4 3"/>
<line x1="595.5" y1="402.5" x2="595.5" y2="695.5" stroke="#cccccc" stroke-width="1" stroke-dasharray="4 3"/>
<line x1="616.5" y1="402.5" x2="616.5" y2="695.5" stroke="#cccccc" stroke-width="1" stroke-dasharray="4 3"/>
<line x1="637.5" y1="402.5" x2="637.5" y2="695.5" stroke="#cccccc" stroke-width="1" stroke-dasharray="4 3"/>
<line x1="657.5" y1="402.5" x2="657.5" y2="695.5" stroke="#cccccc" stroke-width="1" stroke-dasharray="4 3"/>
<line x1="678.5" y1="402.5" x2="678.5" y2="695.5" stroke="#cccccc" stroke-width="1" stroke-dasharray="4 3"/>
<line x1="698.5" y1="402.5" x2="698.5" y2="695.5" stroke="#cccccc" stroke-width="1" stroke-dasharray="4 3"/>
<line x1="719.5" y1="402.5" x2="719.5" y2="695.5" stroke="#cccccc" stroke-width="1" stroke-dasharray="4 3"/>
<line x1="740.5" y1="402.5" x2="740.5" y2="695.5" stroke="#cccccc" stroke-width="1" stroke-dasharray="4 3"/>
<line x1="760.5" y1="402.5" x2="760.5" y2="695.5" stroke="#cccccc" stroke-width="1" stroke-dasharray="4 3"/>
<line x1="781.5" y1="402.5" x2="781.5" y2="695.5" stroke="#cccccc" stroke-width="1" stroke-dasharray="4 3"/>
<line x1="801.5" y1="402.5" x2="801.5" y2="695.5" stroke="#cccccc" stroke-width="1" stroke-dasharray="4 3"/>
<line x1="822.5" y1="402.5" x2="822.5" y2="695.5" stroke="#cccccc" stroke-width="1" stroke-dasharray="4 3"/>
<line x1="19.0" y1="636.5" x2="842.5" y2="636.5" stroke="#c8c8c8" stroke-width="1" stroke-dasharray="4 4"/>
<line x1="19.0" y1="578.5" x2="842.5" y2="578.5" stroke="#c8c8c8" stroke-width="1" stroke-dasharray="4 4"/>
<line x1="19.0" y1="519.5" x2="842.5" y2="519.5" stroke="#c8c8c8" stroke-width="1" stroke-dasharray="4 4"/>
<line x1="19.0" y1="461.5" x2="842.5" y2="461.5" stroke="#c8c8c8" stroke-width="1" stroke-dasharray="4 4"/>
<line x1="19.0" y1="402.5" x2="842.5" y2="402.5" stroke="#000" stroke-width="1.2" stroke-dasharray="4 3"/>
<line x1="842.5" y1="402.5" x2="842.5" y2="695.5" stroke="#000" stroke-width="1.2" stroke-dasharray="4 3"/>
<rect x="18" y="402.5" width="2" height="293.0" fill="#000"/>
<rect x="18" y="694" width="824.5" height="2" fill="#000"/>
<line x1="19.5" y1="696" x2="19.5" y2="701" stroke="#000" stroke-width="1"/>
<line x1="23.5" y1="696" x2="23.5" y2="699.5" stroke="#606060" stroke-width="1"/>
<line x1="27.5" y1="696" x2="27.5" y2="699.5" stroke="#606060" stroke-width="1"/>
<line x1="31.5" y1="696" x2="31.5" y2="699.5" stroke="#606060" stroke-width="1"/>
<line x1="35.5" y1="696" x2="35.5" y2="699.5" stroke="#606060" stroke-width="1"/>
<line x1="40.5" y1="696" x2="40.5" y2="701" stroke="#000" stroke-width="1"/>
<line x1="44.5" y1="696" x2="44.5" y2="699.5" stroke="#606060" stroke-width="1"/>
<line x1="48.5" y1="696" x2="48.5" y2="699.5" stroke="#606060" stroke-width="1"/>
<line x1="52.5" y1="696" x2="52.5" y2="699.5" stroke="#606060" stroke-width="1"/>
<line x1="56.5" y1="696" x2="56.5" y2="699.5" stroke="#606060" stroke-width="1"/>
<line x1="60.5" y1="696" x2="60.5" y2="701" stroke="#000" stroke-width="1"/>
<line x1="64.5" y1="696" x2="64.5" y2="699.5" stroke="#606060" stroke-width="1"/>
<line x1="68.5" y1="696" x2="68.5" y2="699.5" stroke="#606060" stroke-width="1"/>
<line x1="73.5" y1="696" x2="73.5" y2="699.5" stroke="#606060" stroke-width="1"/>
<line x1="77.5" y1="696" x2="77.5" y2="699.5" stroke="#606060" stroke-width="1"/>
<line x1="81.5" y1="696" x2="81.5" y2="701" stroke="#000" stroke-width="1"/>
<line x1="85.5" y1="696" x2="85.5" y2="699.5" stroke="#606060" stroke-width="1"/>
<line x1="89.5" y1="696" x2="89.5" y2="699.5" stroke="#606060" stroke-width="1"/>
<line x1="93.5" y1="696" x2="93.5" y2="699.5" stroke="#606060" stroke-width="1"/>
<line x1="97.5" y1="696" x2="97.5" y2="699.5" stroke="#606060" stroke-width="1"/>
<line x1="101.5" y1="696" x2="101.5" y2="701" stroke="#000" stroke-width="1"/>
<line x1="105.5" y1="696" x2="105.5" y2="699.5" stroke="#606060" stroke-width="1"/>
<line x1="110.5" y1="696" x2="110.5" y2="699.5" stroke="#606060" stroke-width="1"/>
<line x1="114.5" y1="696" x2="114.5" y2="699.5" stroke="#606060" stroke-width="1"/>
<line x1="118.5" y1="696" x2="118.5" y2="699.5" stroke="#606060" stroke-width="1"/>
<line x1="122.5" y1="696" x2="122.5" y2="701" stroke="#000" stroke-width="1"/>
<line x1="126.5" y1="696" x2="126.5" y2="699.5" stroke="#606060" stroke-width="1"/>
<line x1="130.5" y1="696" x2="130.5" y2="699.5" stroke="#606060" stroke-width="1"/>
<line x1="134.5" y1="696" x2="134.5" y2="699.5" stroke="#606060" stroke-width="1"/>
<line x1="138.5" y1="696" x2="138.5" y2="699.5" stroke="#606060" stroke-width="1"/>
<line x1="143.5" y1="696" x2="143.5" y2="701" stroke="#000" stroke-width="1"/>
<line x1="147.5" y1="696" x2="147.5" y2="699.5" stroke="#606060" stroke-width="1"/>
<line x1="151.5" y1="696" x2="151.5" y2="699.5" stroke="#606060" stroke-width="1"/>
<line x1="155.5" y1="696" x2="155.5" y2="699.5" stroke="#606060" stroke-width="1"/>
<line x1="159.5" y1="696" x2="159.5" y2="699.5" stroke="#606060" stroke-width="1"/>
<line x1="163.5" y1="696" x2="163.5" y2="701" stroke="#000" stroke-width="1"/>
<line x1="167.5" y1="696" x2="167.5" y2="699.5" stroke="#606060" stroke-width="1"/>
<line x1="171.5" y1="696" x2="171.5" y2="699.5" stroke="#606060" stroke-width="1"/>
<line x1="175.5" y1="696" x2="175.5" y2="699.5" stroke="#606060" stroke-width="1"/>
<line x1="180.5" y1="696" x2="180.5" y2="699.5" stroke="#606060" stroke-width="1"/>
<line x1="184.5" y1="696" x2="184.5" y2="701" stroke="#000" stroke-width="1"/>
<line x1="188.5" y1="696" x2="188.5" y2="699.5" stroke="#606060" stroke-width="1"/>
<line x1="192.5" y1="696" x2="192.5" y2="699.5" stroke="#606060" stroke-width="1"/>
<line x1="196.5" y1="696" x2="196.5" y2="699.5" stroke="#606060" stroke-width="1"/>
<line x1="200.5" y1="696" x2="200.5" y2="699.5" stroke="#606060" stroke-width="1"/>
<line x1="204.5" y1="696" x2="204.5" y2="701" stroke="#000" stroke-width="1"/>
<line x1="208.5" y1="696" x2="208.5" y2="699.5" stroke="#606060" stroke-width="1"/>
<line x1="213.5" y1="696" x2="213.5" y2="699.5" stroke="#606060" stroke-width="1"/>
<line x1="217.5" y1="696" x2="217.5" y2="699.5" stroke="#606060" stroke-width="1"/>
<line x1="221.5" y1="696" x2="221.5" y2="699.5" stroke="#606060" stroke-width="1"/>
<line x1="225.5" y1="696" x2="225.5" y2="701" stroke="#000" stroke-width="1"/>
<line x1="229.5" y1="696" x2="229.5" y2="699.5" stroke="#606060" stroke-width="1"/>
<line x1="233.5" y1="696" x2="233.5" y2="699.5" stroke="#606060" stroke-width="1"/>
<line x1="237.5" y1="696" x2="237.5" y2="699.5" stroke="#606060" stroke-width="1"/>
<line x1="241.5" y1="696" x2="241.5" y2="699.5" stroke="#606060" stroke-width="1"/>
<line x1="245.5" y1="696" x2="245.5" y2="701" stroke="#000" stroke-width="1"/>
<line x1="250.5" y1="696" x2="250.5" y2="699.5" stroke="#606060" stroke-width="1"/>
<line x1="254.5" y1="696" x2="254.5" y2="699.5" stroke="#606060" stroke-width="1"/>
<line x1="258.5" y1="696" x2="258.5" y2="699.5" stroke="#606060" stroke-width="1"/>
<line x1="262.5" y1="696" x2="262.5" y2="699.5" stroke="#606060" stroke-width="1"/>
<line x1="266.5" y1="696" x2="266.5" y2="701" stroke="#000" stroke-width="1"/>
<line x1="270.5" y1="696" x2="270.5" y2="699.5" stroke="#606060" stroke-width="1"/>
<line x1="274.5" y1="696" x2="274.5" y2="699.5" stroke="#606060" stroke-width="1"/>
<line x1="278.5" y1="696" x2="278.5" y2="699.5" stroke="#606060" stroke-width="1"/>
<line x1="283.5" y1="696" x2="283.5" y2="699.5" stroke="#606060" stroke-width="1"/>
<line x1="287.5" y1="696" x2="287.5" y2="701" stroke="#000" stroke-width="1"/>
<line x1="291.5" y1="696" x2="291.5" y2="699.5" stroke="#606060" stroke-width="1"/>
<line x1="295.5" y1="696" x2="295.5" y2="699.5" stroke="#606060" stroke-width="1"/>
<line x1="299.5" y1="696" x2="299.5" y2="699.5" stroke="#606060" stroke-width="1"/>
<line x1="303.5" y1="696" x2="303.5" y2="699.5" stroke="#606060" stroke-width="1"/>
<line x1="307.5" y1="696" x2="307.5" y2="701" stroke="#000" stroke-width="1"/>
<line x1="311.5" y1="696" x2="311.5" y2="699.5" stroke="#606060" stroke-width="1"/>
<line x1="315.5" y1="696" x2="315.5" y2="699.5" stroke="#606060" stroke-width="1"/>
<line x1="320.5" y1="696" x2="320.5" y2="699.5" stroke="#606060" stroke-width="1"/>
<line x1="324.5" y1="696" x2="324.5" y2="699.5" stroke="#606060" stroke-width="1"/>
<line x1="328.5" y1="696" x2="328.5" y2="701" stroke="#000" stroke-width="1"/>
<line x1="332.5" y1="696" x2="332.5" y2="699.5" stroke="#606060" stroke-width="1"/>
<line x1="336.5" y1="696" x2="336.5" y2="699.5" stroke="#606060" stroke-width="1"/>
<line x1="340.5" y1="696" x2="340.5" y2="699.5" stroke="#606060" stroke-width="1"/>
<line x1="344.5" y1="696" x2="344.5" y2="699.5" stroke="#606060" stroke-width="1"/>
<line x1="348.5" y1="696" x2="348.5" y2="701" stroke="#000" stroke-width="1"/>
<line x1="353.5" y1="696" x2="353.5" y2="699.5" stroke="#606060" stroke-width="1"/>
<line x1="357.5" y1="696" x2="357.5" y2="699.5" stroke="#606060" stroke-width="1"/>
<line x1="361.5" y1="696" x2="361.5" y2="699.5" stroke="#606060" stroke-width="1"/>
<line x1="365.5" y1="696" x2="365.5" y2="699.5" stroke="#606060" stroke-width="1"/>
<line x1="369.5" y1="696" x2="369.5" y2="701" stroke="#000" stroke-width="1"/>
<line x1="373.5" y1="696" x2="373.5" y2="699.5" stroke="#606060" stroke-width="1"/>
<line x1="377.5" y1="696" x2="377.5" y2="699.5" stroke="#606060" stroke-width="1"/>
<line x1="381.5" y1="696" x2="381.5" y2="699.5" stroke="#606060" stroke-width="1"/>
<line x1="385.5" y1="696" x2="385.5" y2="699.5" stroke="#606060" stroke-width="1"/>
<line x1="390.5" y1="696" x2="390.5" y2="701" stroke="#000" stroke-width="1"/>
<line x1="394.5" y1="696" x2="394.5" y2="699.5" stroke="#606060" stroke-width="1"/>
<line x1="398.5" y1="696" x2="398.5" y2="699.5" stroke="#606060" stroke-width="1"/>
<line x1="402.5" y1="696" x2="402.5" y2="699.5" stroke="#606060" stroke-width="1"/>
<line x1="406.5" y1="696" x2="406.5" y2="699.5" stroke="#606060" stroke-width="1"/>
<line x1="410.5" y1="696" x2="410.5" y2="701" stroke="#000" stroke-width="1"/>
<line x1="414.5" y1="696" x2="414.5" y2="699.5" stroke="#606060" stroke-width="1"/>
<line x1="418.5" y1="696" x2="418.5" y2="699.5" stroke="#606060" stroke-width="1"/>
<line x1="423.5" y1="696" x2="423.5" y2="699.5" stroke="#606060" stroke-width="1"/>
<line x1="427.5" y1="696" x2="427.5" y2="699.5" stroke="#606060" stroke-width="1"/>
<line x1="431.5" y1="696" x2="431.5" y2="701" stroke="#000" stroke-width="1"/>
<line x1="435.5" y1="696" x2="435.5" y2="699.5" stroke="#606060" stroke-width="1"/>
<line x1="439.5" y1="696" x2="439.5" y2="699.5" stroke="#606060" stroke-width="1"/>
<line x1="443.5" y1="696" x2="443.5" y2="699.5" stroke="#606060" stroke-width="1"/>
<line x1="447.5" y1="696" x2="447.5" y2="699.5" stroke="#606060" stroke-width="1"/>
<line x1="451.5" y1="696" x2="451.5" y2="701" stroke="#000" stroke-width="1"/>
<line x1="455.5" y1="696" x2="455.5" y2="699.5" stroke="#606060" stroke-width="1"/>
<line x1="460.5" y1="696" x2="460.5" y2="699.5" stroke="#606060" stroke-width="1"/>
<line x1="464.5" y1="696" x2="464.5" y2="699.5" stroke="#606060" stroke-width="1"/>
<line x1="468.5" y1="696" x2="468.5" y2="699.5" stroke="#606060" stroke-width="1"/>
<line x1="472.5" y1="696" x2="472.5" y2="701" stroke="#000" stroke-width="1"/>
<line x1="476.5" y1="696" x2="476.5" y2="699.5" stroke="#606060" stroke-width="1"/>
<line x1="480.5" y1="696" x2="480.5" y2="699.5" stroke="#606060" stroke-width="1"/>
<line x1="484.5" y1="696" x2="484.5" y2="699.5" stroke="#606060" stroke-width="1"/>
<line x1="488.5" y1="696" x2="488.5" y2="699.5" stroke="#606060" stroke-width="1"/>
<line x1="493.5" y1="696" x2="493.5" y2="701" stroke="#000" stroke-width="1"/>
<line x1="497.5" y1="696" x2="497.5" y2="699.5" stroke="#606060" stroke-width="1"/>
<line x1="501.5" y1="696" x2="501.5" y2="699.5" stroke="#606060" stroke-width="1"/>
<line x1="505.5" y1="696" x2="505.5" y2="699.5" stroke="#606060" stroke-width="1"/>
<line x1="509.5" y1="696" x2="509.5" y2="699.5" stroke="#606060" stroke-width="1"/>
<line x1="513.5" y1="696" x2="513.5" y2="701" stroke="#000" stroke-width="1"/>
<line x1="517.5" y1="696" x2="517.5" y2="699.5" stroke="#606060" stroke-width="1"/>
<line x1="521.5" y1="696" x2="521.5" y2="699.5" stroke="#606060" stroke-width="1"/>
<line x1="525.5" y1="696" x2="525.5" y2="699.5" stroke="#606060" stroke-width="1"/>
<line x1="530.5" y1="696" x2="530.5" y2="699.5" stroke="#606060" stroke-width="1"/>
<line x1="534.5" y1="696" x2="534.5" y2="701" stroke="#000" stroke-width="1"/>
<line x1="538.5" y1="696" x2="538.5" y2="699.5" stroke="#606060" stroke-width="1"/>
<line x1="542.5" y1="696" x2="542.5" y2="699.5" stroke="#606060" stroke-width="1"/>
<line x1="546.5" y1="696" x2="546.5" y2="699.5" stroke="#606060" stroke-width="1"/>
<line x1="550.5" y1="696" x2="550.5" y2="699.5" stroke="#606060" stroke-width="1"/>
<line x1="554.5" y1="696" x2="554.5" y2="701" stroke="#000" stroke-width="1"/>
<line x1="558.5" y1="696" x2="558.5" y2="699.5" stroke="#606060" stroke-width="1"/>
<line x1="563.5" y1="696" x2="563.5" y2="699.5" stroke="#606060" stroke-width="1"/>
<line x1="567.5" y1="696" x2="567.5" y2="699.5" stroke="#606060" stroke-width="1"/>
<line x1="571.5" y1="696" x2="571.5" y2="699.5" stroke="#606060" stroke-width="1"/>
<line x1="575.5" y1="696" x2="575.5" y2="701" stroke="#000" stroke-width="1"/>
<line x1="579.5" y1="696" x2="579.5" y2="699.5" stroke="#606060" stroke-width="1"/>
<line x1="583.5" y1="696" x2="583.5" y2="699.5" stroke="#606060" stroke-width="1"/>
<line x1="587.5" y1="696" x2="587.5" y2="699.5" stroke="#606060" stroke-width="1"/>
<line x1="591.5" y1="696" x2="591.5" y2="699.5" stroke="#606060" stroke-width="1"/>
<line x1="595.5" y1="696" x2="595.5" y2="701" stroke="#000" stroke-width="1"/>
<line x1="600.5" y1="696" x2="600.5" y2="699.5" stroke="#606060" stroke-width="1"/>
<line x1="604.5" y1="696" x2="604.5" y2="699.5" stroke="#606060" stroke-width="1"/>
<line x1="608.5" y1="696" x2="608.5" y2="699.5" stroke="#606060" stroke-width="1"/>
<line x1="612.5" y1="696" x2="612.5" y2="699.5" stroke="#606060" stroke-width="1"/>
<line x1="616.5" y1="696" x2="616.5" y2="701" stroke="#000" stroke-width="1"/>
<line x1="620.5" y1="696" x2="620.5" y2="699.5" stroke="#606060" stroke-width="1"/>
<line x1="624.5" y1="696" x2="624.5" y2="699.5" stroke="#606060" stroke-width="1"/>
<line x1="628.5" y1="696" x2="628.5" y2="699.5" stroke="#606060" stroke-width="1"/>
<line x1="633.5" y1="696" x2="633.5" y2="699.5" stroke="#606060" stroke-width="1"/>
<line x1="637.5" y1="696" x2="637.5" y2="701" stroke="#000" stroke-width="1"/>
<line x1="641.5" y1="696" x2="641.5" y2="699.5" stroke="#606060" stroke-width="1"/>
<line x1="645.5" y1="696" x2="645.5" y2="699.5" stroke="#606060" stroke-width="1"/>
<line x1="649.5" y1="696" x2="649.5" y2="699.5" stroke="#606060" stroke-width="1"/>
<line x1="653.5" y1="696" x2="653.5" y2="699.5" stroke="#606060" stroke-width="1"/>
<line x1="657.5" y1="696" x2="657.5" y2="701" stroke="#000" stroke-width="1"/>
<line x1="661.5" y1="696" x2="661.5" y2="699.5" stroke="#606060" stroke-width="1"/>
<line x1="665.5" y1="696" x2="665.5" y2="699.5" stroke="#606060" stroke-width="1"/>
<line x1="670.5" y1="696" x2="670.5" y2="699.5" stroke="#606060" stroke-width="1"/>
<line x1="674.5" y1="696" x2="674.5" y2="699.5" stroke="#606060" stroke-width="1"/>
<line x1="678.5" y1="696" x2="678.5" y2="701" stroke="#000" stroke-width="1"/>
<line x1="682.5" y1="696" x2="682.5" y2="699.5" stroke="#606060" stroke-width="1"/>
<line x1="686.5" y1="696" x2="686.5" y2="699.5" stroke="#606060" stroke-width="1"/>
<line x1="690.5" y1="696" x2="690.5" y2="699.5" stroke="#606060" stroke-width="1"/>
<line x1="694.5" y1="696" x2="694.5" y2="699.5" stroke="#606060" stroke-width="1"/>
<line x1="698.5" y1="696" x2="698.5" y2="701" stroke="#000" stroke-width="1"/>
<line x1="703.5" y1="696" x2="703.5" y2="699.5" stroke="#606060" stroke-width="1"/>
<line x1="707.5" y1="696" x2="707.5" y2="699.5" stroke="#606060" stroke-width="1"/>
<line x1="711.5" y1="696" x2="711.5" y2="699.5" stroke="#606060" stroke-width="1"/>
<line x1="715.5" y1="696" x2="715.5" y2="699.5" stroke="#606060" stroke-width="1"/>
<line x1="719.5" y1="696" x2="719.5" y2="701" stroke="#000" stroke-width="1"/>
<line x1="723.5" y1="696" x2="723.5" y2="699.5" stroke="#606060" stroke-width="1"/>
<line x1="727.5" y1="696" x2="727.5" y2="699.5" stroke="#606060" stroke-width="1"/>
<line x1="731.5" y1="696" x2="731.5" y2="699.5" stroke="#606060" stroke-width="1"/>
<line x1="735.5" y1="696" x2="735.5" y2="699.5" stroke="#606060" stroke-width="1"/>
<line x1="740.5" y1="696" x2="740.5" y2="701" stroke="#000" stroke-width="1"/>
<line x1="744.5" y1="696" x2="744.5" y2="699.5" stroke="#606060" stroke-width="1"/>
<line x1="748.5" y1="696" x2="748.5" y2="699.5" stroke="#606060" stroke-width="1"/>
<line x1="752.5" y1="696" x2="752.5" y2="699.5" stroke="#606060" stroke-width="1"/>
<line x1="756.5" y1="696" x2="756.5" y2="699.5" stroke="#606060" stroke-width="1"/>
<line x1="760.5" y1="696" x2="760.5" y2="701" stroke="#000" stroke-width="1"/>
<line x1="764.5" y1="696" x2="764.5" y2="699.5" stroke="#606060" stroke-width="1"/>
<line x1="768.5" y1="696" x2="768.5" y2="699.5" stroke="#606060" stroke-width="1"/>
<line x1="773.5" y1="696" x2="773.5" y2="699.5" stroke="#606060" stroke-width="1"/>
<line x1="777.5" y1="696" x2="777.5" y2="699.5" stroke="#606060" stroke-width="1"/>
<line x1="781.5" y1="696" x2="781.5" y2="701" stroke="#000" stroke-width="1"/>
<line x1="785.5" y1="696" x2="785.5" y2="699.5" stroke="#606060" stroke-width="1"/>
<line x1="789.5" y1="696" x2="789.5" y2="699.5" stroke="#606060" stroke-width="1"/>
<line x1="793.5" y1="696" x2="793.5" y2="699.5" stroke="#606060" stroke-width="1"/>
<line x1="797.5" y1="696" x2="797.5" y2="699.5" stroke="#606060" stroke-width="1"/>
<line x1="801.5" y1="696" x2="801.5" y2="701" stroke="#000" stroke-width="1"/>
<line x1="805.5" y1="696" x2="805.5" y2="699.5" stroke="#606060" stroke-width="1"/>
<line x1="810.5" y1="696" x2="810.5" y2="699.5" stroke="#606060" stroke-width="1"/>
<line x1="814.5" y1="696" x2="814.5" y2="699.5" stroke="#606060" stroke-width="1"/>
<line x1="818.5" y1="696" x2="818.5" y2="699.5" stroke="#606060" stroke-width="1"/>
<line x1="822.5" y1="696" x2="822.5" y2="701" stroke="#000" stroke-width="1"/>
<line x1="826.5" y1="696" x2="826.5" y2="699.5" stroke="#606060" stroke-width="1"/>
<line x1="830.5" y1="696" x2="830.5" y2="699.5" stroke="#606060" stroke-width="1"/>
<line x1="834.5" y1="696" x2="834.5" y2="699.5" stroke="#606060" stroke-width="1"/>
<line x1="838.5" y1="696" x2="838.5" y2="699.5" stroke="#606060" stroke-width="1"/>
<line x1="842.5" y1="696" x2="842.5" y2="701" stroke="#000" stroke-width="1"/>
<text x="19.0" y="712" font-size="11" text-anchor="middle" fill="#000">0</text>
<text x="39.5875" y="712" font-size="11" text-anchor="middle" fill="#000">5</text>
<text x="60.175" y="712" font-size="11" text-anchor="middle" fill="#000">10</text>
<text x="80.76249999999999" y="712" font-size="11" text-anchor="middle" fill="#000">15</text>
<text x="101.35" y="712" font-size="11" text-anchor="middle" fill="#000">20</text>
<text x="121.9375" y="712" font-size="11" text-anchor="middle" fill="#000">25</text>
<text x="142.52499999999998" y="712" font-size="11" text-anchor="middle" fill="#000">30</text>
<text x="163.11249999999998" y="712" font-size="11" text-anchor="middle" fill="#000">35</text>
<text x="183.7" y="712" font-size="11" text-anchor="middle" fill="#000">40</text>
<text x="204.2875" y="712" font-size="11" text-anchor="middle" fill="#000">45</text>
<text x="224.875" y="712" font-size="11" text-anchor="middle" fill="#000">50</text>
<text x="245.46249999999998" y="712" font-size="11" text-anchor="middle" fill="#000">55</text>
<text x="266.04999999999995" y="712" font-size="11" text-anchor="middle" fill="#000">60</text>
<text x="286.6375" y="712" font-size="11" text-anchor="middle" fill="#000">65</text>
<text x="307.22499999999997" y="712" font-size="11" text-anchor="middle" fill="#000">70</text>
<text x="327.8125" y="712" font-size="11" text-anchor="middle" fill="#000">75</text>
<text x="348.4" y="712" font-size="11" text-anchor="middle" fill="#000">80</text>
<text x="368.98749999999995" y="712" font-size="11" text-anchor="middle" fill="#000">85</text>
<text x="389.575" y="712" font-size="11" text-anchor="middle" fill="#000">90</text>
<text x="410.16249999999997" y="712" font-size="11" text-anchor="middle" fill="#000">95</text>
<text x="430.75" y="712" font-size="11" text-anchor="middle" fill="#000">100</text>
<text x="451.3375" y="712" font-size="11" text-anchor="middle" fill="#000">105</text>
<text x="471.92499999999995" y="712" font-size="11" text-anchor="middle" fill="#000">110</text>
<text x="492.5125" y="712" font-size="11" text-anchor="middle" fill="#000">115</text>
<text x="513.0999999999999" y="712" font-size="11" text-anchor="middle" fill="#000">120</text>
<text x="533.6875" y="712" font-size="11" text-anchor="middle" fill="#000">125</text>
<text x="554.275" y="712" font-size="11" text-anchor="middle" fill="#000">130</text>
<text x="574.8625" y="712" font-size="11" text-anchor="middle" fill="#000">135</text>
<text x="595.4499999999999" y="712" font-size="11" text-anchor="middle" fill="#000">140</text>
<text x="616.0374999999999" y="712" font-size="11" text-anchor="middle" fill="#000">145</text>
<text x="636.625" y="712" font-size="11" text-anchor="middle" fill="#000">150</text>
<text x="657.2125" y="712" font-size="11" text-anchor="middle" fill="#000">155</text>
<text x="677.8" y="712" font-size="11" text-anchor="middle" fill="#000">160</text>
<text x="698.3874999999999" y="712" font-size="11" text-anchor="middle" fill="#000">165</text>
<text x="718.9749999999999" y="712" font-size="11" text-anchor="middle" fill="#000">170</text>
<text x="739.5625" y="712" font-size="11" text-anchor="middle" fill="#000">175</text>
<text x="760.15" y="712" font-size="11" text-anchor="middle" fill="#000">180</text>
<text x="780.7375" y="712" font-size="11" text-anchor="middle" fill="#000">185</text>
<text x="801.3249999999999" y="712" font-size="11" text-anchor="middle" fill="#000">190</text>
<text x="821.9124999999999" y="712" font-size="11" text-anchor="middle" fill="#000">195</text>
<text x="842.5" y="712" font-size="11" text-anchor="middle" fill="#000">200</text>
<line x1="14" y1="696.5" x2="18" y2="696.5" stroke="#909090"/>
<text x="6" y="698.5" font-size="11" fill="#000">0</text>
<line x1="14" y1="637.5" x2="18" y2="637.5" stroke="#909090"/>
<text x="6" y="639.9" font-size="11" fill="#000">1</text>
<line x1="14" y1="578.5" x2="18" y2="578.5" stroke="#909090"/>
<text x="6" y="581.3" font-size="11" fill="#000">2</text>
<line x1="14" y1="520.5" x2="18" y2="520.5" stroke="#909090"/>
<text x="6" y="522.7" font-size="11" fill="#000">3</text>
<line x1="14" y1="461.5" x2="18" y2="461.5" stroke="#909090"/>
<text x="6" y="464.1" font-size="11" fill="#000">4</text>
<line x1="14" y1="402.5" x2="18" y2="402.5" stroke="#909090"/>
<text x="6" y="405.5" font-size="11" fill="#000">5</text>
<line x1="16" y1="696.5" x2="18" y2="696.5" stroke="#909090"/>
<line x1="16" y1="684.5" x2="18" y2="684.5" stroke="#909090"/>
<line x1="16" y1="672.5" x2="18" y2="672.5" stroke="#909090"/>
<line x1="16" y1="660.5" x2="18" y2="660.5" stroke="#909090"/>
<line x1="16" y1="649.5" x2="18" y2="649.5" stroke="#909090"/>
<line x1="16" y1="637.5" x2="18" y2="637.5" stroke="#909090"/>
<line x1="16" y1="625.5" x2="18" y2="625.5" stroke="#909090"/>
<line x1="16" y1="613.5" x2="18" y2="613.5" stroke="#909090"/>
<line x1="16" y1="602.5" x2="18" y2="602.5" stroke="#909090"/>
<line x1="16" y1="590.5" x2="18" y2="590.5" stroke="#909090"/>
<line x1="16" y1="578.5" x2="18" y2="578.5" stroke="#909090"/>
<line x1="16" y1="567.5" x2="18" y2="567.5" stroke="#909090"/>
<line x1="16" y1="555.5" x2="18" y2="555.5" stroke="#909090"/>
<line x1="16" y1="543.5" x2="18" y2="543.5" stroke="#909090"/>
<line x1="16" y1="531.5" x2="18" y2="531.5" stroke="#909090"/>
<line x1="16" y1="520.5" x2="18" y2="520.5" stroke="#909090"/>
<line x1="16" y1="508.5" x2="18" y2="508.5" stroke="#909090"/>
<line x1="16" y1="496.5" x2="18" y2="496.5" stroke="#909090"/>
<line x1="16" y1="485.5" x2="18" y2="485.5" stroke="#909090"/>
<line x1="16" y1="473.5" x2="18" y2="473.5" stroke="#909090"/>
<line x1="16" y1="461.5" x2="18" y2="461.5" stroke="#909090"/>
<line x1="16" y1="449.5" x2="18" y2="449.5" stroke="#909090"/>
<line x1="16" y1="438.5" x2="18" y2="438.5" stroke="#909090"/>
<line x1="16" y1="426.5" x2="18" y2="426.5" stroke="#909090"/>
<line x1="16" y1="414.5" x2="18" y2="414.5" stroke="#909090"/>
<line x1="16" y1="402.5" x2="18" y2="402.5" stroke="#909090"/>
<rect x="20" y="403" width="822.5" height="3" fill="#127812"/>
<polyline points="20.0,631.0 28.0,630.5 36.0,630.5 44.0,631.0 52.0,631.0 60.0,630.5 68.0,631.0 76.0,631.5 84.0,630.5 92.0,631.0 100.0,630.5 108.0,631.0 116.0,631.0 124.0,631.0 132.0,630.5 140.0,631.0 148.0,631.0 156.0,631.5 164.0,631.0 172.0,630.5 180.0,630.5 188.0,631.0 196.0,631.0 204.0,631.5 212.0,631.0 220.0,631.0 228.0,631.5 236.0,631.0 244.0,630.5 252.0,631.0 260.0,631.5 268.0,631.0 276.0,631.5 284.0,631.0 292.0,631.0 300.0,630.5 308.0,631.0 316.0,631.0 324.0,631.0 332.0,631.0 340.0,631.0 348.0,630.5 356.0,631.5 364.0,631.0 372.0,631.5 380.0,631.0 388.0,631.0 396.0,631.5 404.0,630.5 412.0,631.0 420.0,631.0 428.0,631.0 436.0,631.0 444.0,631.0 452.0,631.0 460.0,631.0 468.0,631.0 476.0,631.0 484.0,631.5 492.0,631.0 500.0,631.5 508.0,631.0 516.0,631.0 524.0,630.5 532.0,631.0 540.0,630.5 548.0,631.0 556.0,630.5 564.0,630.5 572.0,631.0 580.0,630.5 588.0,631.0 596.0,631.0 604.0,631.5 612.0,631.0 620.0,631.0 628.0,630.5 636.0,631.5 644.0,631.5 652.0,631.0 660.0,631.5 668.0,631.0 676.0,630.5 684.0,630.5 692.0,630.5 700.0,631.0 708.0,631.5 716.0,631.5 724.0,631.0 732.0,631.5 740.0,630.5 748.0,631.0 756.0,631.0 764.0,631.0 772.0,631.0 780.0,631.0 788.0,631.5 796.0,631.0 804.0,631.0 812.0,631.0 820.0,631.0 828.0,631.0 836.0,631.0 842.5,631" fill="none" stroke="#1a6e1a" stroke-width="1.1"/>
<polyline points="20.0,671.8 28.0,671.8 36.0,671.8 44.0,671.8 52.0,671.8 60.0,671.8 68.0,671.3 76.0,671.3 84.0,671.8 92.0,671.8 100.0,672.3 108.0,671.3 116.0,671.8 124.0,671.3 132.0,671.8 140.0,671.3 148.0,671.8 156.0,671.8 164.0,671.8 172.0,671.8 180.0,671.8 188.0,671.8 196.0,671.3 204.0,671.3 212.0,671.8 220.0,671.8 228.0,671.8 236.0,671.8 244.0,671.3 252.0,671.8 260.0,671.8 268.0,672.3 276.0,671.8 284.0,671.8 292.0,671.8 300.0,671.8 308.0,671.8 316.0,671.8 324.0,671.8 332.0,671.8 340.0,671.3 348.0,671.8 356.0,672.3 364.0,671.3 372.0,672.3 380.0,671.3 388.0,671.8 396.0,671.3 404.0,671.3 412.0,671.8 420.0,671.8 428.0,672.3 436.0,673.8 444.0,673.8 452.0,673.3 460.0,673.3 468.0,673.3 476.0,673.3 484.0,672.8 492.0,673.3 500.0,672.8 508.0,673.3 516.0,673.3 524.0,673.3 532.0,672.8 540.0,673.3 548.0,673.3 556.0,673.3 564.0,672.8 572.0,672.8 580.0,673.8 588.0,673.3 596.0,673.3 604.0,673.8 612.0,673.8 620.0,673.3 628.0,673.3 636.0,673.3 644.0,673.8 652.0,673.3 660.0,672.8 668.0,673.8 676.0,673.3 684.0,673.8 692.0,673.3 700.0,673.3 708.0,672.8 716.0,673.3 724.0,673.8 732.0,673.3 740.0,673.3 748.0,673.3 756.0,673.8 764.0,673.3 772.0,673.3 780.0,672.8 788.0,672.8 796.0,673.3 804.0,673.3 812.0,673.3 820.0,673.3 828.0,673.3 836.0,673.3 842.5,673.5" fill="none" stroke="#1a6e1a" stroke-width="1.1"/>
</svg>
<div class="a" style="left:29.0px;top:661px;width:24px;height:24px;background:#D4D0C8;border-top:1px solid #fff;border-left:1px solid #fff;border-right:1px solid #404040;border-bottom:1px solid #404040;box-shadow:inset -1px -1px 0 #808080"></div>
<div class="a" style="left:53.7px;top:661px;width:24px;height:24px;background:#D4D0C8;border-top:1px solid #fff;border-left:1px solid #fff;border-right:1px solid #404040;border-bottom:1px solid #404040;box-shadow:inset -1px -1px 0 #808080"></div>
<div class="a" style="left:78.4px;top:661px;width:24px;height:24px;background:#D4D0C8;border-top:1px solid #fff;border-left:1px solid #fff;border-right:1px solid #404040;border-bottom:1px solid #404040;box-shadow:inset -1px -1px 0 #808080"></div>
<div class="a" style="left:103.1px;top:661px;width:24px;height:24px;background:#D4D0C8;border-top:1px solid #fff;border-left:1px solid #fff;border-right:1px solid #404040;border-bottom:1px solid #404040;box-shadow:inset -1px -1px 0 #808080"></div>
<div class="a" style="left:127.8px;top:661px;width:24px;height:24px;background:#D4D0C8;border-top:1px solid #fff;border-left:1px solid #fff;border-right:1px solid #404040;border-bottom:1px solid #404040;box-shadow:inset -1px -1px 0 #808080"></div>
<div class="a" style="left:152.5px;top:661px;width:24px;height:24px;background:#D4D0C8;border-top:1px solid #fff;border-left:1px solid #fff;border-right:1px solid #404040;border-bottom:1px solid #404040;box-shadow:inset -1px -1px 0 #808080"></div>
<svg style="left:0;top:0" width="200" height="700"><path d="M38 666.5 L46 673 L38 679.5 Z" fill="#157a96"/><rect x="61" y="668" width="10" height="10" fill="#000"/><circle cx="90.5" cy="673" r="5.5" fill="#f01010"/><rect x="109" y="667.5" width="14" height="2.5" fill="#1a3a8a"/><path d="M109 671 L123 671 L116 678.5 Z" fill="#1a3a8a"/><path d="M135 673.5 L142 667 L142 680 Z" fill="#909090"/><path d="M135 673.5 L142 680" stroke="#fff" stroke-width="1"/><path d="M163 667 L170 673.5 L163 680 Z" fill="#909090"/><path d="M163 680 L170 673.5" stroke="#fff" stroke-width="1"/></svg>
<div class="a" style="left:854px;top:43px;width:167px;height:47px;border:1px solid #808080"></div>
<div class="a" style="left:855px;top:44px;width:167px;height:47px;border:1px solid #fff;border-right:none;border-bottom:none"></div>
<div class="a" style="left:855px;top:44px;width:167px;height:47px;border-right:1px solid #fff;border-bottom:1px solid #fff"></div>
<div class="a" style="left:860px;top:37px;width:94px;height:12px;background:#D4D0C8"></div>
<div class="t" style="left:862px;top:39.20px;font-size:12px;color:#000;font-weight:bold;letter-spacing:0.0px;">Давление [Bar]</div>
<div class="a" style="left:854px;top:97px;width:167px;height:163px;border:1px solid #808080"></div>
<div class="a" style="left:855px;top:98px;width:167px;height:163px;border:1px solid #fff;border-right:none;border-bottom:none"></div>
<div class="a" style="left:855px;top:98px;width:167px;height:163px;border-right:1px solid #fff;border-bottom:1px solid #fff"></div>
<div class="a" style="left:860px;top:91px;width:122px;height:12px;background:#D4D0C8"></div>
<div class="t" style="left:862px;top:92.30px;font-size:12px;color:#000;font-weight:bold;letter-spacing:-0.15px;">Время впрыска [ms]</div>
<div class="a" style="left:854px;top:266px;width:167px;height:47px;border:1px solid #808080"></div>
<div class="a" style="left:855px;top:267px;width:167px;height:47px;border:1px solid #fff;border-right:none;border-bottom:none"></div>
<div class="a" style="left:855px;top:267px;width:167px;height:47px;border-right:1px solid #fff;border-bottom:1px solid #fff"></div>
<div class="a" style="left:860px;top:260px;width:106px;height:12px;background:#D4D0C8"></div>
<div class="t" style="left:862px;top:262.00px;font-size:12px;color:#000;font-weight:bold;letter-spacing:0.3px;">Температура  [C]</div>
<div class="a" style="left:854px;top:319px;width:167px;height:64px;border:1px solid #808080"></div>
<div class="a" style="left:855px;top:320px;width:167px;height:64px;border:1px solid #fff;border-right:none;border-bottom:none"></div>
<div class="a" style="left:855px;top:320px;width:167px;height:64px;border-right:1px solid #fff;border-bottom:1px solid #fff"></div>
<div class="a" style="left:860px;top:313px;width:98px;height:12px;background:#D4D0C8"></div>
<div class="t" style="left:862px;top:315.20px;font-size:12px;color:#000;font-weight:bold;letter-spacing:0.2px;">Напряжение [V]</div>
<div class="a" style="left:854px;top:389px;width:167px;height:29px;border:1px solid #808080"></div>
<div class="a" style="left:855px;top:390px;width:167px;height:29px;border:1px solid #fff;border-right:none;border-bottom:none"></div>
<div class="a" style="left:855px;top:390px;width:167px;height:29px;border-right:1px solid #fff;border-bottom:1px solid #fff"></div>
<div class="a" style="left:860px;top:383px;width:64px;height:12px;background:#D4D0C8"></div>
<div class="t" style="left:862px;top:385.20px;font-size:12px;color:#000;font-weight:bold;letter-spacing:0.4px;">RPM [rpm]</div>
<div class="a" style="left:854px;top:424px;width:167px;height:54px;border:1px solid #808080"></div>
<div class="a" style="left:855px;top:425px;width:167px;height:54px;border:1px solid #fff;border-right:none;border-bottom:none"></div>
<div class="a" style="left:855px;top:425px;width:167px;height:54px;border-right:1px solid #fff;border-bottom:1px solid #fff"></div>
<div class="a" style="left:860px;top:418px;width:80px;height:12px;background:#D4D0C8"></div>
<div class="t" style="left:862px;top:420.50px;font-size:11.5px;color:#000;font-weight:normal;letter-spacing:-0.2px;">ГАЗ действует</div>
<div class="t" style="left:862px;top:53.20px;font-size:16px;color:#17861a;font-weight:normal;letter-spacing:1.6px;-webkit-text-stroke:0.35px #17861a">ГАЗ</div>
<div class="a" style="left:944px;top:55px;width:13px;height:13px;background:#fff;border-top:1px solid #808080;border-left:1px solid #808080;border-right:1px solid #fff;border-bottom:1px solid #fff;box-shadow:inset 1px 1px 0 #404040, inset -1px -1px 0 #D4D0C8"></div>
<svg class="a" style="left:944px;top:55px" width="13" height="13"><path d="M3 6 L5.5 8.5 L10 4" fill="none" stroke="#000" stroke-width="2"/></svg>
<div class="t" style="right:9px;top:53.20px;font-size:16px;color:#12127a;font-weight:normal;letter-spacing:0.9px;-webkit-text-stroke:0.35px #12127a">1.11</div>
<div class="t" style="left:862px;top:71.00px;font-size:16px;color:#a08a1e;font-weight:normal;letter-spacing:0.9px;-webkit-text-stroke:0.35px #a08a1e">MAP</div>
<div class="a" style="left:944px;top:72px;width:13px;height:13px;background:#fff;border-top:1px solid #808080;border-left:1px solid #808080;border-right:1px solid #fff;border-bottom:1px solid #fff;box-shadow:inset 1px 1px 0 #404040, inset -1px -1px 0 #D4D0C8"></div>
<div class="t" style="right:9px;top:71.00px;font-size:16px;color:#12127a;font-weight:normal;letter-spacing:0.9px;-webkit-text-stroke:0.35px #12127a">0.28</div>
<div class="t" style="left:862px;top:105.40px;font-size:16px;color:#1414c8;font-weight:normal;letter-spacing:0.9px;-webkit-text-stroke:0.35px #1414c8">форс. 1</div>
<div class="a" style="left:944px;top:107px;width:13px;height:13px;background:#fff;border-top:1px solid #808080;border-left:1px solid #808080;border-right:1px solid #fff;border-bottom:1px solid #fff;box-shadow:inset 1px 1px 0 #404040, inset -1px -1px 0 #D4D0C8"></div>
<div class="t" style="right:9px;top:105.40px;font-size:16px;color:#12127a;font-weight:normal;letter-spacing:0.9px;-webkit-text-stroke:0.35px #12127a">2.8</div>
<div class="t" style="left:862px;top:122.40px;font-size:16px;color:#1414c8;font-weight:normal;letter-spacing:0.9px;-webkit-text-stroke:0.35px #1414c8">форс. 2</div>
<div class="t" style="right:9px;top:122.40px;font-size:16px;color:#12127a;font-weight:normal;letter-spacing:0.9px;-webkit-text-stroke:0.35px #12127a">2.6</div>
<div class="t" style="left:862px;top:139.40px;font-size:16px;color:#1414c8;font-weight:normal;letter-spacing:0.9px;-webkit-text-stroke:0.35px #1414c8">форс. 3</div>
<div class="t" style="right:9px;top:139.40px;font-size:16px;color:#12127a;font-weight:normal;letter-spacing:0.9px;-webkit-text-stroke:0.35px #12127a">2.7</div>
<div class="t" style="left:862px;top:156.40px;font-size:16px;color:#1414c8;font-weight:normal;letter-spacing:0.9px;-webkit-text-stroke:0.35px #1414c8">форс. 4</div>
<div class="t" style="right:9px;top:156.40px;font-size:16px;color:#12127a;font-weight:normal;letter-spacing:0.9px;-webkit-text-stroke:0.35px #12127a">2.5</div>
<div class="t" style="left:862px;top:173.40px;font-size:16px;color:#1414c8;font-weight:normal;letter-spacing:0.9px;-webkit-text-stroke:0.35px #1414c8">форс. 5</div>
<div class="t" style="right:9px;top:173.40px;font-size:16px;color:#12127a;font-weight:normal;letter-spacing:0.9px;-webkit-text-stroke:0.35px #12127a">2.8</div>
<div class="t" style="left:862px;top:190.40px;font-size:16px;color:#1414c8;font-weight:normal;letter-spacing:0.9px;-webkit-text-stroke:0.35px #1414c8">форс. 6</div>
<div class="t" style="right:9px;top:190.40px;font-size:16px;color:#12127a;font-weight:normal;letter-spacing:0.9px;-webkit-text-stroke:0.35px #12127a">2.6</div>
<div class="t" style="left:862px;top:207.40px;font-size:16px;color:#1414c8;font-weight:normal;letter-spacing:0.9px;-webkit-text-stroke:0.35px #1414c8">форс. 7</div>
<div class="t" style="right:9px;top:207.40px;font-size:16px;color:#12127a;font-weight:normal;letter-spacing:0.9px;-webkit-text-stroke:0.35px #12127a">0.0</div>
<div class="t" style="left:862px;top:224.40px;font-size:16px;color:#1414c8;font-weight:normal;letter-spacing:0.9px;-webkit-text-stroke:0.35px #1414c8">форс. 8</div>
<div class="t" style="right:9px;top:224.40px;font-size:16px;color:#12127a;font-weight:normal;letter-spacing:0.9px;-webkit-text-stroke:0.35px #12127a">0.0</div>
<div class="t" style="left:862px;top:241.00px;font-size:16px;color:#17861a;font-weight:normal;letter-spacing:1.6px;-webkit-text-stroke:0.35px #17861a">ГАЗ</div>
<div class="t" style="right:9px;top:241.00px;font-size:16px;color:#12127a;font-weight:normal;letter-spacing:0.9px;-webkit-text-stroke:0.35px #12127a">3.8</div>
<div class="a" style="left:946px;top:242px;width:13px;height:13px;background:#fff;border-top:1px solid #808080;border-left:1px solid #808080;border-right:1px solid #fff;border-bottom:1px solid #fff;box-shadow:inset 1px 1px 0 #404040, inset -1px -1px 0 #D4D0C8"></div>
<svg class="a" style="left:946px;top:242px" width="13" height="13"><path d="M3 6 L5.5 8.5 L10 4" fill="none" stroke="#000" stroke-width="2"/></svg>
<div class="t" style="left:862px;top:276.00px;font-size:16px;color:#8c1414;font-weight:normal;letter-spacing:1.6px;-webkit-text-stroke:0.35px #8c1414">ГАЗ</div>
<div class="a" style="left:944px;top:278px;width:13px;height:13px;background:#fff;border-top:1px solid #808080;border-left:1px solid #808080;border-right:1px solid #fff;border-bottom:1px solid #fff;box-shadow:inset 1px 1px 0 #404040, inset -1px -1px 0 #D4D0C8"></div>
<div class="t" style="right:9px;top:276.00px;font-size:16px;color:#12127a;font-weight:normal;letter-spacing:0.9px;-webkit-text-stroke:0.35px #12127a">52</div>
<div class="t" style="left:862px;top:293.00px;font-size:16px;color:#eea038;font-weight:normal;letter-spacing:1.2px;-webkit-text-stroke:0.35px #eea038">Ред.</div>
<div class="a" style="left:944px;top:294px;width:13px;height:13px;background:#fff;border-top:1px solid #808080;border-left:1px solid #808080;border-right:1px solid #fff;border-bottom:1px solid #fff;box-shadow:inset 1px 1px 0 #404040, inset -1px -1px 0 #D4D0C8"></div>
<div class="t" style="right:9px;top:293.00px;font-size:16px;color:#12127a;font-weight:normal;letter-spacing:0.9px;-webkit-text-stroke:0.35px #12127a">76</div>
<div class="t" style="left:862px;top:327.40px;font-size:13px;color:#e040e0;font-weight:bold;letter-spacing:0.5px;-webkit-text-stroke:0px #e040e0">Лямбда 1</div>
<div class="a" style="left:944px;top:327px;width:13px;height:13px;background:#fff;border-top:1px solid #808080;border-left:1px solid #808080;border-right:1px solid #fff;border-bottom:1px solid #fff;box-shadow:inset 1px 1px 0 #404040, inset -1px -1px 0 #D4D0C8"></div>
<div class="t" style="right:9px;top:329.00px;font-size:16px;color:#12127a;font-weight:normal;letter-spacing:0.9px;-webkit-text-stroke:0.35px #12127a">0.22</div>
<div class="t" style="left:862px;top:343.70px;font-size:13px;color:#7a1a8a;font-weight:bold;letter-spacing:0.5px;-webkit-text-stroke:0px #7a1a8a">Лямбда 2</div>
<div class="a" style="left:944px;top:343px;width:13px;height:13px;background:#fff;border-top:1px solid #808080;border-left:1px solid #808080;border-right:1px solid #fff;border-bottom:1px solid #fff;box-shadow:inset 1px 1px 0 #404040, inset -1px -1px 0 #D4D0C8"></div>
<div class="t" style="right:9px;top:345.00px;font-size:16px;color:#12127a;font-weight:normal;letter-spacing:0.9px;-webkit-text-stroke:0.35px #12127a">0.18</div>
<div class="t" style="left:862px;top:359.60px;font-size:16px;color:#808020;font-weight:normal;letter-spacing:1.3px;-webkit-text-stroke:0.35px #808020">Батарея</div>
<div class="a" style="left:944px;top:361px;width:13px;height:13px;background:#fff;border-top:1px solid #808080;border-left:1px solid #808080;border-right:1px solid #fff;border-bottom:1px solid #fff;box-shadow:inset 1px 1px 0 #404040, inset -1px -1px 0 #D4D0C8"></div>
<div class="t" style="right:9px;top:361.00px;font-size:16px;color:#12127a;font-weight:normal;letter-spacing:0.5px;-webkit-text-stroke:0.35px #12127a">13.95</div>
<div class="t" style="left:862px;top:400.00px;font-size:14px;color:#e01818;font-weight:bold;letter-spacing:0.6px;-webkit-text-stroke:0px #e01818">RPM</div>
<div class="a" style="left:944px;top:400px;width:13px;height:13px;background:#fff;border-top:1px solid #808080;border-left:1px solid #808080;border-right:1px solid #fff;border-bottom:1px solid #fff;box-shadow:inset 1px 1px 0 #404040, inset -1px -1px 0 #D4D0C8"></div>
<div class="t" style="right:9px;top:400.00px;font-size:16px;color:#12127a;font-weight:normal;letter-spacing:0.9px;-webkit-text-stroke:0.35px #12127a">600</div>
<svg style="left:0;top:0" width="1023" height="769"><rect x="869.0" y="436" width="3" height="1" fill="#000"/><path d="M863.0 440.5 L866.0 438.5 L871.0 439.5 L874.0 441 L874.0 443 L865.0 443 Z" fill="#403040"/><rect x="865.0" y="443" width="9" height="7.5" fill="#10a010" stroke="#60d060" stroke-width="0.6"/><rect x="867.0" y="452" width="5" height="1" fill="#a08090"/><rect x="866.0" y="454.5" width="7" height="1" fill="#80d080"/><text x="869.5" y="469" font-size="12.5" font-weight="bold" text-anchor="middle" fill="#000">1</text><rect x="889.3" y="436" width="3" height="1" fill="#000"/><path d="M883.3 440.5 L886.3 438.5 L891.3 439.5 L894.3 441 L894.3 443 L885.3 443 Z" fill="#403040"/><rect x="885.3" y="443" width="9" height="7.5" fill="#10a010" stroke="#60d060" stroke-width="0.6"/><rect x="887.3" y="452" width="5" height="1" fill="#a08090"/><rect x="886.3" y="454.5" width="7" height="1" fill="#80d080"/><text x="889.8" y="469" font-size="12.5" font-weight="bold" text-anchor="middle" fill="#000">2</text><rect x="909.6" y="436" width="3" height="1" fill="#000"/><path d="M903.6 440.5 L906.6 438.5 L911.6 439.5 L914.6 441 L914.6 443 L905.6 443 Z" fill="#403040"/><rect x="905.6" y="443" width="9" height="7.5" fill="#10a010" stroke="#60d060" stroke-width="0.6"/><rect x="907.6" y="452" width="5" height="1" fill="#a08090"/><rect x="906.6" y="454.5" width="7" height="1" fill="#80d080"/><text x="910.1" y="469" font-size="12.5" font-weight="bold" text-anchor="middle" fill="#000">3</text><rect x="929.9" y="436" width="3" height="1" fill="#000"/><path d="M923.9 440.5 L926.9 438.5 L931.9 439.5 L934.9 441 L934.9 443 L925.9 443 Z" fill="#403040"/><rect x="925.9" y="443" width="9" height="7.5" fill="#10a010" stroke="#60d060" stroke-width="0.6"/><rect x="927.9" y="452" width="5" height="1" fill="#a08090"/><rect x="926.9" y="454.5" width="7" height="1" fill="#80d080"/><text x="930.4" y="469" font-size="12.5" font-weight="bold" text-anchor="middle" fill="#000">4</text><rect x="950.2" y="436" width="3" height="1" fill="#000"/><path d="M944.2 440.5 L947.2 438.5 L952.2 439.5 L955.2 441 L955.2 443 L946.2 443 Z" fill="#403040"/><rect x="946.2" y="443" width="9" height="7.5" fill="#10a010" stroke="#60d060" stroke-width="0.6"/><rect x="948.2" y="452" width="5" height="1" fill="#a08090"/><rect x="947.2" y="454.5" width="7" height="1" fill="#80d080"/><text x="950.7" y="469" font-size="12.5" font-weight="bold" text-anchor="middle" fill="#000">5</text><rect x="970.5" y="436" width="3" height="1" fill="#000"/><path d="M964.5 440.5 L967.5 438.5 L972.5 439.5 L975.5 441 L975.5 443 L966.5 443 Z" fill="#403040"/><rect x="966.5" y="443" width="9" height="7.5" fill="#10a010" stroke="#60d060" stroke-width="0.6"/><rect x="968.5" y="452" width="5" height="1" fill="#a08090"/><rect x="967.5" y="454.5" width="7" height="1" fill="#80d080"/><text x="971.0" y="469" font-size="12.5" font-weight="bold" text-anchor="middle" fill="#000">6</text><rect x="990.8" y="436" width="3" height="1" fill="#000"/><path d="M984.8 440.5 L987.8 438.5 L992.8 439.5 L995.8 441 L995.8 443 L986.8 443 Z" fill="#403040"/><rect x="986.8" y="443" width="9" height="7.5" fill="#e8f4f0" stroke="#909090" stroke-width="0.6"/><rect x="986.8" y="446" width="9" height="1" fill="#909090"/><rect x="988.8" y="452" width="5" height="1" fill="#a08090"/><rect x="987.8" y="454.5" width="7" height="1" fill="#80d080"/><text x="991.3" y="469" font-size="12.5" font-weight="bold" text-anchor="middle" fill="#000">7</text><rect x="1011.1" y="436" width="3" height="1" fill="#000"/><path d="M1005.1 440.5 L1008.1 438.5 L1013.1 439.5 L1016.1 441 L1016.1 443 L1007.1 443 Z" fill="#403040"/><rect x="1007.1" y="443" width="9" height="7.5" fill="#e8f4f0" stroke="#909090" stroke-width="0.6"/><rect x="1007.1" y="446" width="9" height="1" fill="#909090"/><rect x="1009.1" y="452" width="5" height="1" fill="#a08090"/><rect x="1008.1" y="454.5" width="7" height="1" fill="#80d080"/><text x="1011.6" y="469" font-size="12.5" font-weight="bold" text-anchor="middle" fill="#000">8</text></svg>
<div class="a" style="left:889px;top:634px;width:95px;height:85px;background:#000;border:1px solid #fff"></div>
<svg style="left:0;top:0" width="1023" height="769"><path d="M899.8 700.5 L899.4 691.7 L912.4 676.8 L912.9 685.3 Z" fill="#e02020" stroke="#ffd0c8" stroke-width="0.8" stroke-linejoin="round"/><path d="M916.5 682 L916 671 L927.5 664 L928 675.5 Z" fill="none" stroke="#e0e0e0" stroke-width="1"/><path d="M930.5 672 L930 660.5 L941.5 655.5 L942 667 Z" fill="none" stroke="#e0e0e0" stroke-width="1"/><path d="M944.5 664.5 L944 654 L955.5 650.5 L956 661 Z" fill="none" stroke="#e0e0e0" stroke-width="1"/><path d="M959 659 L958.5 649 L970 647 L970.5 656.5 Z" fill="none" stroke="#e0e0e0" stroke-width="1"/><circle cx="928.8" cy="690" r="5.3" fill="#109010" stroke="#70f070" stroke-width="0.9"/><circle cx="956" cy="688.7" r="15.2" fill="none" stroke="#f0f0f0" stroke-width="1"/><text x="956.3" y="693.6" font-size="11" letter-spacing="0.8" text-anchor="middle" fill="#f0f0f0">B/G</text></svg>
<div class="a" style="left:0px;top:721px;width:99px;height:17px;background:#D4D0C8;border-top:1px solid #808080;border-left:1px solid #808080;border-right:1px solid #fff;border-bottom:1px solid #fff"></div>
<div class="t" style="left:-51px;width:200px;text-align:center;top:725.00px;font-size:11px;color:#000;font-weight:normal;letter-spacing:0.1px;">Подлючите</div>
<div class="a" style="left:102px;top:721px;width:198px;height:17px;background:#D4D0C8;border-top:1px solid #808080;border-left:1px solid #808080;border-right:1px solid #fff;border-bottom:1px solid #fff"></div>
<div class="t" style="left:108px;top:725.00px;font-size:11px;color:#000;font-weight:normal;letter-spacing:0.1px;">Верс. 1.11.26   17/10/2007  13:34:10</div>
<div class="a" style="left:303px;top:721px;width:555px;height:17px;background:#D4D0C8;border-top:1px solid #808080;border-left:1px solid #808080;border-right:1px solid #fff;border-bottom:1px solid #fff"></div>
<div class="a" style="left:861px;top:721px;width:162px;height:17px;background:#0a7a0a;border-top:1px solid #808080;border-left:1px solid #808080;border-right:1px solid #fff;border-bottom:1px solid #fff"></div>
<div class="t" style="left:842px;width:200px;text-align:center;top:724.50px;font-size:12px;color:#e0f0e0;font-weight:normal;letter-spacing:0.5px;">ГАЗ</div>
<div class="a" style="left:0px;top:739px;width:1023px;height:1px;background:#D4D0C8"></div>
<div class="a" style="left:0px;top:740px;width:1023px;height:1px;background:#fff"></div>
<div class="a" style="left:0px;top:741px;width:1023px;height:28px;background:#D4D0C8"></div>
<div class="a" style="left:2px;top:742px;width:51px;height:22px;background:#D4D0C8;border-top:1px solid #fff;border-left:1px solid #fff;border-right:1px solid #404040;border-bottom:1px solid #404040;box-shadow:inset -1px -1px 0 #808080"></div>
<svg style="left:0;top:0" width="60" height="769"><path d="M6 748 Q9 745.5 12 747.5 L10.5 753 Q7.5 751 4.5 753.5 Z" fill="#e8501a"/><path d="M12.5 747.8 Q15.5 749.5 19 747 L17.5 752.5 Q14 754.5 11 753.3 Z" fill="#50a820"/><path d="M4.2 754.3 Q7.3 751.8 10.3 753.8 L8.8 759.3 Q5.8 757.3 2.8 759.8 Z" fill="#2060d8"/><path d="M10.8 754 Q14 755.8 17.3 753.2 L15.8 758.7 Q12.5 760.7 9.3 759.5 Z" fill="#f8c018"/></svg>
<div class="t" style="left:22px;top:748.00px;font-size:12px;color:#000;font-weight:bold;letter-spacing:0px;">Пуск</div>
<div class="a" style="left:58px;top:742px;width:160px;height:22px;background:#D4D0C8;border-top:1px solid #fff;border-left:1px solid #fff;border-right:1px solid #404040;border-bottom:1px solid #404040;box-shadow:inset -1px -1px 0 #808080"></div>
<svg style="left:0;top:0" width="300" height="769"><path d="M66 746 L70 745 L73 747 L73 761 L70 762 L66 761 Z" fill="#e8c860" stroke="#b09030" stroke-width="0.7"/><path d="M68 747 L73 748 L73 760 L68 761 Z" fill="#f4dc80"/></svg>
<div class="t" style="left:81px;top:749.00px;font-size:11px;color:#000;font-weight:normal;letter-spacing:0.2px;">УОЗ</div>
<div class="a" style="left:221px;top:742px;width:159px;height:22px;background:#E4E1DA;border-top:1px solid #404040;border-left:1px solid #404040;border-right:1px solid #fff;border-bottom:1px solid #fff;box-shadow:inset 1px 1px 0 #808080"></div>
<div class="t" style="left:226px;top:748.00px;font-size:13px;color:#10206a;font-weight:bold;letter-spacing:0px;">D</div>
<div class="a" style="left:235px;top:752px;width:6px;height:2px;background:#10206a"></div>
<div class="a" style="left:236px;top:752px;width:2px;height:6px;background:#10206a"></div>
<div class="t" style="left:246px;top:749.00px;font-size:11px;color:#000;font-weight:bold;letter-spacing:0.1px;">DIGITRONIC – EASY F...</div>
<div class="a" style="left:802px;top:745px;width:13px;height:17px;background:#0a2a6a"></div>
<div class="t" style="left:803px;top:749.00px;font-size:11px;color:#fff;font-weight:normal;letter-spacing:-1.2px;">EN</div>
<div class="a" style="left:820px;top:742px;width:203px;height:24px;border-top:1px solid #808080;border-left:1px solid #808080;border-bottom:1px solid #fff"></div>
<div class="t" style="left:825px;top:746.00px;font-size:14px;color:#000;font-weight:bold;letter-spacing:0px;">«</div>
<svg style="left:0;top:0" width="1023" height="769"><rect x="840.5" y="746.5" width="9" height="15" rx="2" fill="#e0e0e0" stroke="#000" stroke-width="1"/><rect x="842.5" y="748.5" width="5" height="11" fill="#c8c8c8" stroke="#000" stroke-width="0.6"/><path d="M856 749 L859 745.5 L865.5 745.5 L868.5 749 L868.5 759 L865.5 762.5 L859 762.5 L856 759 Z" fill="#1a3ac0"/><path d="M859.5 750.5 L865 757 L862.3 759.5 L862.3 748.5 L865 751 L859.5 757.5" fill="none" stroke="#fff" stroke-width="1.2"/><rect x="877" y="747" width="10" height="8" fill="#908060"/><rect x="872" y="750" width="10" height="9" fill="#d02020"/><rect x="875" y="759" width="4" height="2" fill="#605050"/><rect x="891" y="757" width="2.5" height="4" fill="#fff" stroke="#808080" stroke-width="0.5"/><rect x="895" y="754" width="2.5" height="7" fill="#fff" stroke="#808080" stroke-width="0.5"/><rect x="899" y="751" width="2.5" height="10" fill="#fff" stroke="#808080" stroke-width="0.5"/><rect x="903" y="748" width="2.5" height="13" fill="#fff" stroke="#808080" stroke-width="0.5"/><path d="M899 757 L905 762 M905 757 L899 762" stroke="#e02020" stroke-width="1.5"/><rect x="916" y="747" width="10" height="8" fill="#908060"/><rect x="911" y="750" width="10" height="9" fill="#d02020"/><rect x="914" y="759" width="4" height="2" fill="#605050"/><rect x="927" y="745" width="16" height="17" fill="#800000"/><text x="928" y="758" font-size="12" fill="#fff">En</text><path d="M946 753 Q953 745 960 753 M948.5 755.5 Q953 750 957.5 755.5 M951 758 Q953 755.5 955 758" fill="none" stroke="#000" stroke-width="1.3"/><path d="M953 756 L959 762 M959 756 L953 762" stroke="#e02020" stroke-width="1.6"/><path d="M964 751 L967 751 L971 747 L971 761 L967 757 L964 757 Z" fill="#e8e8e8" stroke="#606060" stroke-width="0.8"/><path d="M974 750 Q977 754 974 758 M976.5 748 Q980.5 754 976.5 760" fill="none" stroke="#30a030" stroke-width="1"/></svg>
<div class="t" style="left:986px;top:749.00px;font-size:11px;color:#000;font-weight:normal;letter-spacing:0.2px;">19:43</div>
</body></html>
